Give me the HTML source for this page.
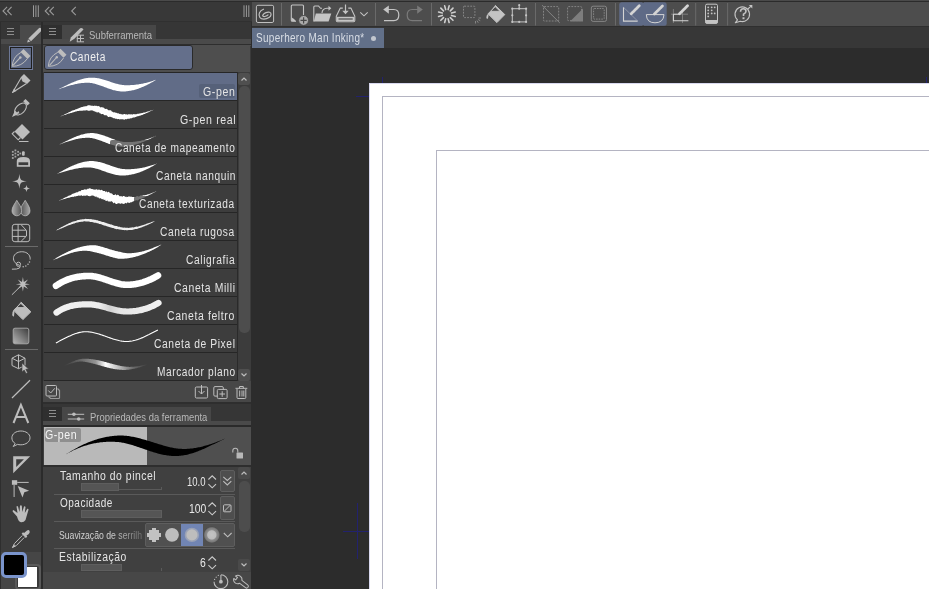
<!DOCTYPE html>
<html><head><meta charset="utf-8">
<style>
*{margin:0;padding:0;box-sizing:border-box}
html,body{width:929px;height:589px;overflow:hidden;background:#2c2c2c;font-family:"Liberation Sans",sans-serif;}
.a{position:absolute}
svg{position:absolute;overflow:visible}
.t{position:absolute;color:#e6e6e6;font-size:12px;white-space:nowrap;line-height:14px;z-index:1}
</style></head><body>
<div class="a" style="left:0px;top:0px;width:929px;height:1px;background:#4a4a4a;"></div>
<div class="a" style="left:0px;top:1px;width:929px;height:1px;background:#2b2b2b;"></div>
<div class="a" style="left:0px;top:2px;width:252px;height:19px;background:#383838;"></div>
<div class="a" style="left:252px;top:2px;width:677px;height:24px;background:#4d4d4d;"></div>
<div class="a" style="left:252px;top:26px;width:677px;height:22px;background:#373737;"></div>
<div class="a" style="left:252px;top:26px;width:677px;height:1px;background:#2f2f2f;"></div>
<div class="a" style="left:252px;top:48px;width:677px;height:541px;background:#2c2c2c;"></div>
<div class="a" style="left:369px;top:83px;width:560px;height:506px;background:#ffffff;"></div>
<div class="a" style="left:369px;top:83px;width:560px;height:1px;background:#d8d8ee;"></div>
<div class="a" style="left:369px;top:83px;width:1px;height:506px;background:#d8d8ee;"></div>
<div class="a" style="left:382px;top:96px;width:547px;height:1px;background:#b4b4c2;"></div>
<div class="a" style="left:382px;top:96px;width:1px;height:493px;background:#b4b4c2;"></div>
<div class="a" style="left:436px;top:150px;width:493px;height:1px;background:#b4b4c2;"></div>
<div class="a" style="left:436px;top:150px;width:1px;height:439px;background:#b4b4c2;"></div>
<div class="a" style="left:357px;top:503px;width:1px;height:56px;background:#22226e;"></div>
<div class="a" style="left:343px;top:531px;width:26px;height:1px;background:#22226e;"></div>
<div class="a" style="left:382px;top:77px;width:1px;height:6px;background:#22226e;"></div>
<div class="a" style="left:356px;top:96px;width:13px;height:1px;background:#22226e;"></div>
<div class="a" style="left:926px;top:77px;width:1px;height:6px;background:#22226e;"></div>
<div class="a" style="left:252px;top:28px;width:132px;height:20px;background:#627089;"></div>
<div class="t" style="left:255.70px;top:30.90px;font-size:12.5px;color:#d8dde5;transform:scaleX(0.7963);transform-origin:0 0;letter-spacing:0.4px;">Superhero Man Inking*</div>
<div class="a" style="left:371px;top:35.5px;width:5.2px;height:5.2px;border-radius:3px;background:#c2c7cf"></div>
<div class="a" style="left:0px;top:21px;width:252px;height:1px;background:#303030;"></div>
<div class="a" style="left:0px;top:22px;width:41px;height:567px;background:#3c3c3c;"></div>
<div class="a" style="left:0px;top:22px;width:1px;height:567px;background:#2e2e2e;"></div>
<div class="a" style="left:41px;top:22px;width:2px;height:567px;background:#2b2b2b;"></div>
<div class="a" style="left:1px;top:22px;width:40px;height:22px;background:#363636;"></div>
<div class="a" style="left:1px;top:39px;width:40px;height:5px;background:#4a4a4a;"></div>
<div class="a" style="left:20px;top:25px;width:21px;height:19px;background:#4a4a4a;"></div>
<div class="a" style="left:7px;top:28px;width:7px;height:1px;background:#8e8e8e;"></div>
<div class="a" style="left:7px;top:31px;width:7px;height:1px;background:#8e8e8e;"></div>
<div class="a" style="left:7px;top:34px;width:7px;height:1px;background:#8e8e8e;"></div>
<svg style="left:25px;top:26px;overflow:hidden" width="16" height="18" viewBox="0 0 16 18"><path d="M13.6,2.4 Q15,1.2 16.2,2.4 Q17.4,3.6 16.2,5 L6,15.2 L3.4,12.6 Z M3,13.2 L5.4,15.6 L2.2,16.6 Z" fill="#bdbdbd"/></svg>
<div class="a" style="left:43px;top:22px;width:208px;height:17px;background:#363636;"></div>
<div class="a" style="left:43px;top:25px;width:19px;height:14px;background:#2f2f2f;"></div>
<div class="a" style="left:49px;top:28px;width:7px;height:1px;background:#8e8e8e;"></div>
<div class="a" style="left:49px;top:31px;width:7px;height:1px;background:#8e8e8e;"></div>
<div class="a" style="left:49px;top:34px;width:7px;height:1px;background:#8e8e8e;"></div>
<div class="a" style="left:62px;top:25px;width:94px;height:16px;background:#474747;"></div>
<div class="a" style="left:43px;top:39px;width:208px;height:5px;background:#4a4a4a;"></div>
<div class="a" style="left:43px;top:44px;width:208px;height:1px;background:#2e2e2e;"></div>
<div class="a" style="left:43px;top:45px;width:208px;height:27px;background:#4e4e4e;"></div>
<div class="a" style="left:250px;top:46px;width:1px;height:26px;background:#3a3a3a;"></div>
<div class="a" style="left:44px;top:45px;width:149px;height:25px;background:#646f8b;border:1px solid #2a2a2a;border-radius:3px"></div>
<div class="t" style="left:69.60px;top:50.00px;font-size:12px;color:#f0f0f0;transform:scaleX(0.8476);transform-origin:0 0;letter-spacing:0.6px;">Caneta</div>
<div class="t" style="left:88.93px;top:27.70px;font-size:11px;color:#b8b8b8;transform:scaleX(0.8653);transform-origin:0 0;">Subferramenta</div>
<div class="a" style="left:43px;top:72px;width:208px;height:309px;background:#3c3c3c;"></div>
<div class="a" style="left:43px;top:72px;width:1px;height:309px;background:#3a3a3a;"></div>
<div class="a" style="left:44px;top:72px;width:193px;height:1px;background:#262626;"></div>
<div class="a" style="left:44px;top:73px;width:193px;height:27px;background:#616c87;"></div>
<div class="a" style="left:44px;top:100px;width:193px;height:1px;background:#262626;"></div>
<div class="a" style="left:44px;top:101px;width:193px;height:27px;background:#3d3d3d;"></div>
<div class="a" style="left:44px;top:128px;width:193px;height:1px;background:#262626;"></div>
<div class="a" style="left:44px;top:129px;width:193px;height:27px;background:#3d3d3d;"></div>
<div class="a" style="left:44px;top:156px;width:193px;height:1px;background:#262626;"></div>
<div class="a" style="left:44px;top:157px;width:193px;height:27px;background:#3d3d3d;"></div>
<div class="a" style="left:44px;top:184px;width:193px;height:1px;background:#262626;"></div>
<div class="a" style="left:44px;top:185px;width:193px;height:27px;background:#3d3d3d;"></div>
<div class="a" style="left:44px;top:212px;width:193px;height:1px;background:#262626;"></div>
<div class="a" style="left:44px;top:213px;width:193px;height:27px;background:#3d3d3d;"></div>
<div class="a" style="left:44px;top:240px;width:193px;height:1px;background:#262626;"></div>
<div class="a" style="left:44px;top:241px;width:193px;height:27px;background:#3d3d3d;"></div>
<div class="a" style="left:44px;top:268px;width:193px;height:1px;background:#262626;"></div>
<div class="a" style="left:44px;top:269px;width:193px;height:27px;background:#3d3d3d;"></div>
<div class="a" style="left:44px;top:296px;width:193px;height:1px;background:#262626;"></div>
<div class="a" style="left:44px;top:297px;width:193px;height:27px;background:#3d3d3d;"></div>
<div class="a" style="left:44px;top:324px;width:193px;height:1px;background:#262626;"></div>
<div class="a" style="left:44px;top:325px;width:193px;height:27px;background:#3d3d3d;"></div>
<div class="a" style="left:44px;top:352px;width:193px;height:1px;background:#262626;"></div>
<div class="a" style="left:44px;top:353px;width:193px;height:27px;background:#3d3d3d;"></div>
<div class="a" style="left:44px;top:380px;width:193px;height:1px;background:#262626;"></div>
<div class="a" style="left:237px;top:72px;width:1px;height:309px;background:#2a2a2a;"></div>
<svg style="left:0;top:0" width="929" height="589"><path d="M57.00,89.90 L57.82,89.52 L58.64,89.14 L59.46,88.74 L60.27,88.35 L61.08,87.95 L61.90,87.55 L62.71,87.14 L63.52,86.74 L64.33,86.34 L65.14,85.94 L65.95,85.54 L66.76,85.15 L67.57,84.75 L68.39,84.37 L69.20,83.98 L70.01,83.60 L70.83,83.23 L71.65,82.87 L72.46,82.51 L73.29,82.15 L74.11,81.81 L74.93,81.48 L75.76,81.15 L76.59,80.83 L77.42,80.53 L78.26,80.23 L79.10,79.95 L79.94,79.68 L80.78,79.42 L81.63,79.18 L82.49,78.95 L83.34,78.74 L84.21,78.54 L85.07,78.36 L85.94,78.20 L86.82,78.06 L87.69,77.93 L88.58,77.82 L89.47,77.74 L90.37,77.68 L91.29,77.64 L92.21,77.64 L93.13,77.67 L94.05,77.73 L94.97,77.81 L95.88,77.92 L96.78,78.05 L97.69,78.20 L98.59,78.37 L99.48,78.55 L100.37,78.76 L101.26,78.98 L102.14,79.21 L103.01,79.45 L103.88,79.70 L104.75,79.96 L105.60,80.22 L106.46,80.50 L107.31,80.77 L108.15,81.05 L108.98,81.33 L109.81,81.60 L110.64,81.88 L111.46,82.15 L112.27,82.42 L113.07,82.68 L113.87,82.94 L114.67,83.18 L115.45,83.42 L116.23,83.65 L117.01,83.86 L117.77,84.06 L118.54,84.25 L119.29,84.42 L120.04,84.58 L120.78,84.72 L121.52,84.84 L122.26,84.94 L122.98,85.03 L123.71,85.09 L124.47,85.13 L125.25,85.16 L126.04,85.19 L126.83,85.20 L127.62,85.20 L128.41,85.20 L129.21,85.18 L130.01,85.16 L130.81,85.12 L131.62,85.08 L132.42,85.02 L133.23,84.96 L134.05,84.89 L134.86,84.81 L135.68,84.72 L136.51,84.62 L137.33,84.50 L138.16,84.39 L138.99,84.26 L139.83,84.12 L140.67,83.97 L141.51,83.81 L142.35,83.64 L143.20,83.47 L144.05,83.28 L144.90,83.08 L145.75,82.88 L146.61,82.66 L147.46,82.44 L148.33,82.21 L149.19,81.96 L150.05,81.71 L150.92,81.44 L151.79,81.17 L152.65,80.89 L153.52,80.59 L154.39,80.29 L155.26,79.97 L156.13,79.65 L157.00,79.30 L157.00,79.30 L156.20,79.78 L155.40,80.26 L154.61,80.74 L153.81,81.21 L153.01,81.68 L152.21,82.14 L151.42,82.60 L150.61,83.04 L149.81,83.48 L149.01,83.91 L148.20,84.34 L147.39,84.75 L146.58,85.15 L145.77,85.55 L144.95,85.93 L144.14,86.31 L143.32,86.67 L142.49,87.03 L141.67,87.37 L140.84,87.70 L140.01,88.02 L139.17,88.33 L138.33,88.63 L137.49,88.91 L136.65,89.18 L135.80,89.44 L134.95,89.68 L134.10,89.91 L133.24,90.13 L132.38,90.33 L131.52,90.52 L130.66,90.69 L129.79,90.85 L128.92,90.99 L128.05,91.12 L127.17,91.23 L126.29,91.32 L125.41,91.40 L124.53,91.46 L123.62,91.51 L122.68,91.52 L121.74,91.50 L120.81,91.44 L119.88,91.36 L118.96,91.25 L118.04,91.12 L117.13,90.96 L116.23,90.78 L115.33,90.58 L114.43,90.36 L113.55,90.13 L112.67,89.88 L111.79,89.62 L110.93,89.35 L110.07,89.06 L109.21,88.77 L108.36,88.47 L107.52,88.17 L106.68,87.86 L105.85,87.55 L105.03,87.24 L104.21,86.93 L103.40,86.62 L102.59,86.32 L101.79,86.02 L100.99,85.72 L100.20,85.44 L99.41,85.16 L98.63,84.89 L97.85,84.63 L97.08,84.39 L96.31,84.16 L95.55,83.94 L94.79,83.74 L94.03,83.56 L93.28,83.39 L92.53,83.24 L91.79,83.12 L91.04,83.01 L90.30,82.93 L89.53,82.87 L88.76,82.82 L87.97,82.80 L87.18,82.78 L86.39,82.79 L85.60,82.80 L84.79,82.84 L83.99,82.88 L83.18,82.95 L82.37,83.02 L81.55,83.11 L80.73,83.21 L79.90,83.33 L79.08,83.46 L78.24,83.60 L77.41,83.75 L76.57,83.91 L75.73,84.09 L74.89,84.27 L74.05,84.47 L73.20,84.68 L72.35,84.89 L71.50,85.11 L70.65,85.35 L69.80,85.59 L68.95,85.84 L68.09,86.09 L67.24,86.35 L66.38,86.62 L65.53,86.89 L64.67,87.17 L63.82,87.46 L62.96,87.75 L62.10,88.04 L61.25,88.34 L60.40,88.64 L59.54,88.95 L58.69,89.26 L57.84,89.57 L57.00,89.90Z" fill="#ffffff"/><path d="M58.00,117.50 L58.62,117.23 L59.23,116.96 L59.84,116.68 L60.45,116.40 L61.06,116.12 L61.67,115.83 L62.28,115.54 L62.89,115.27 L63.49,114.97 L64.10,114.66 L64.70,114.36 L65.29,114.05 L65.92,113.81 L66.53,113.53 L67.13,113.23 L67.75,112.97 L68.31,112.59 L68.91,112.27 L69.53,112.03 L70.17,111.85 L70.71,111.40 L71.30,111.06 L71.91,110.80 L72.54,110.58 L73.14,110.32 L73.78,110.13 L74.42,109.97 L75.04,109.76 L75.61,109.36 L76.23,109.15 L76.87,109.00 L77.47,108.73 L78.09,108.49 L78.72,108.31 L79.34,108.10 L79.91,107.72 L80.54,107.53 L81.14,107.21 L81.76,106.95 L82.42,106.92 L83.04,106.69 L83.68,106.55 L84.32,106.42 L84.95,106.18 L85.61,106.16 L86.26,106.15 L86.91,105.97 L87.53,105.44 L88.19,105.34 L88.85,105.32 L89.52,105.35 L90.20,105.38 L90.88,105.61 L91.56,105.73 L92.25,105.77 L92.93,105.76 L93.59,105.96 L94.32,105.75 L95.05,105.59 L95.67,105.95 L96.43,105.74 L97.08,105.98 L97.73,106.21 L98.52,105.93 L99.17,106.17 L99.70,106.81 L100.24,107.37 L100.94,107.41 L101.78,107.07 L102.42,107.32 L103.03,107.64 L103.83,107.46 L104.30,108.14 L104.81,108.70 L105.43,108.96 L106.23,108.76 L106.91,108.89 L107.44,109.36 L107.93,109.92 L108.49,110.31 L109.18,110.36 L109.95,110.20 L110.66,110.17 L111.20,110.57 L111.60,111.31 L112.16,111.64 L112.77,111.84 L113.32,112.18 L113.90,112.43 L114.60,112.26 L115.25,112.24 L115.68,112.92 L116.34,112.81 L116.92,112.95 L117.45,113.25 L117.97,113.61 L118.62,113.34 L119.14,113.65 L119.66,113.95 L120.27,113.69 L120.77,114.18 L121.32,114.25 L121.88,114.23 L122.42,114.44 L122.98,114.45 L123.56,114.16 L124.15,113.92 L124.75,114.07 L125.35,114.42 L125.94,114.30 L126.53,114.22 L127.16,114.65 L127.76,114.54 L128.34,114.33 L128.93,114.19 L129.55,114.31 L130.18,114.58 L130.77,114.35 L131.35,114.16 L132.01,114.51 L132.62,114.45 L133.21,114.24 L133.81,114.11 L134.46,114.25 L135.07,114.20 L135.70,114.20 L136.33,114.17 L136.95,114.08 L137.53,113.83 L138.16,113.76 L138.79,113.70 L139.39,113.49 L140.03,113.45 L140.65,113.34 L141.26,113.17 L141.86,112.93 L142.52,112.91 L143.15,112.80 L143.77,112.62 L144.38,112.42 L145.05,112.38 L145.70,112.25 L146.31,112.04 L146.91,111.77 L147.55,111.60 L148.20,111.46 L148.84,111.30 L149.47,111.09 L150.09,110.84 L150.71,110.60 L151.35,110.38 L151.99,110.18 L152.61,109.91 L153.24,109.66 L153.87,109.41 L154.50,109.15 L155.13,108.88 L155.76,108.59 L156.38,108.30 L157.00,108.00 L157.00,108.00 L156.38,108.31 L155.77,108.62 L155.16,108.94 L154.55,109.25 L153.94,109.56 L153.34,109.87 L152.73,110.17 L152.11,110.44 L151.51,110.77 L150.91,111.08 L150.30,111.35 L149.68,111.60 L149.07,111.88 L148.48,112.20 L147.89,112.52 L147.29,112.81 L146.65,112.98 L146.03,113.21 L145.43,113.51 L144.87,113.88 L144.24,114.08 L143.62,114.30 L143.02,114.57 L142.44,114.92 L141.80,115.04 L141.17,115.21 L140.56,115.44 L139.96,115.73 L139.32,115.84 L138.72,116.08 L138.10,116.30 L137.45,116.32 L136.83,116.50 L136.22,116.74 L135.61,116.98 L134.99,117.16 L134.40,117.52 L133.77,117.60 L133.11,117.60 L132.49,117.72 L131.91,118.25 L131.26,118.22 L130.60,118.14 L130.00,118.56 L129.38,118.80 L128.73,118.78 L128.08,118.67 L127.44,118.66 L126.83,119.16 L126.18,119.15 L125.54,119.08 L124.90,119.48 L124.26,119.66 L123.61,119.44 L122.96,119.15 L122.28,119.14 L121.58,119.29 L120.90,119.18 L120.22,119.13 L119.48,119.47 L118.85,119.02 L118.14,119.11 L117.42,119.17 L116.83,118.65 L116.11,118.71 L115.41,118.69 L114.75,118.50 L114.17,118.03 L113.36,118.34 L112.77,117.92 L112.24,117.35 L111.58,117.17 L110.89,117.07 L110.26,116.82 L109.58,116.70 L108.75,116.97 L108.05,116.89 L107.53,116.37 L107.05,115.73 L106.51,115.29 L105.83,115.19 L105.08,115.25 L104.38,115.23 L103.82,114.86 L103.38,114.17 L102.77,113.95 L102.04,114.03 L101.27,114.24 L100.83,113.60 L100.21,113.46 L99.61,113.28 L99.21,112.51 L98.68,112.14 L97.98,112.31 L97.26,112.56 L96.68,112.44 L96.23,111.82 L95.65,111.73 L95.06,111.68 L94.58,111.19 L93.97,111.31 L93.46,110.92 L92.94,110.52 L92.37,110.56 L91.82,110.43 L91.26,110.37 L90.70,110.42 L90.15,110.62 L89.59,110.66 L89.02,110.71 L88.45,110.74 L87.87,110.72 L87.26,110.27 L86.66,110.20 L86.08,110.32 L85.50,110.45 L84.89,110.39 L84.30,110.44 L83.70,110.51 L83.08,110.50 L82.51,110.71 L81.88,110.70 L81.25,110.66 L80.64,110.75 L79.98,110.67 L79.36,110.77 L78.75,110.93 L78.13,111.03 L77.49,111.11 L76.89,111.33 L76.28,111.51 L75.61,111.51 L74.99,111.70 L74.40,111.95 L73.79,112.19 L73.16,112.36 L72.56,112.59 L71.93,112.78 L71.27,112.89 L70.58,112.91 L69.98,113.21 L69.37,113.45 L68.72,113.62 L68.05,113.73 L67.43,113.97 L66.79,114.18 L66.17,114.40 L65.56,114.68 L64.92,114.88 L64.28,115.10 L63.64,115.32 L63.01,115.53 L62.38,115.78 L61.75,116.02 L61.12,116.26 L60.50,116.50 L59.87,116.75 L59.25,117.00 L58.62,117.25 L58.00,117.50Z" fill="#ffffff"/><path d="M57.00,145.50 L57.83,145.14 L58.65,144.76 L59.47,144.38 L60.29,143.99 L61.11,143.60 L61.93,143.20 L62.74,142.80 L63.56,142.40 L64.37,141.99 L65.18,141.59 L65.99,141.19 L66.80,140.78 L67.62,140.39 L68.43,139.99 L69.24,139.60 L70.05,139.21 L70.87,138.82 L71.68,138.44 L72.50,138.07 L73.32,137.71 L74.14,137.35 L74.96,137.00 L75.79,136.66 L76.61,136.33 L77.44,136.02 L78.28,135.71 L79.11,135.41 L79.95,135.13 L80.80,134.87 L81.64,134.61 L82.49,134.38 L83.35,134.16 L84.21,133.95 L85.07,133.77 L85.94,133.60 L86.82,133.45 L87.69,133.33 L88.58,133.22 L89.47,133.14 L90.37,133.09 L91.29,133.06 L92.22,133.07 L93.14,133.12 L94.05,133.19 L94.97,133.30 L95.88,133.43 L96.78,133.59 L97.68,133.77 L98.58,133.97 L99.47,134.19 L100.36,134.43 L101.24,134.69 L102.11,134.96 L102.98,135.24 L103.85,135.53 L104.71,135.83 L105.56,136.14 L106.41,136.46 L107.25,136.78 L108.09,137.10 L108.92,137.43 L109.74,137.75 L110.56,138.07 L111.37,138.39 L112.18,138.70 L112.98,139.01 L113.78,139.31 L114.57,139.60 L115.36,139.88 L116.14,140.14 L116.91,140.40 L117.68,140.64 L118.45,140.86 L119.21,141.07 L119.97,141.26 L120.72,141.42 L121.47,141.57 L122.22,141.70 L122.96,141.80 L123.70,141.88 L124.48,141.94 L125.27,141.98 L126.07,142.01 L126.88,142.03 L127.68,142.05 L128.49,142.05 L129.30,142.04 L130.11,142.01 L130.92,141.98 L131.74,141.94 L132.56,141.88 L133.38,141.82 L134.21,141.74 L135.04,141.65 L135.87,141.56 L136.70,141.44 L137.53,141.32 L138.37,141.19 L139.21,141.04 L140.05,140.89 L140.89,140.72 L141.73,140.54 L142.58,140.35 L143.42,140.15 L144.27,139.94 L145.12,139.71 L145.97,139.47 L146.82,139.23 L147.67,138.96 L148.52,138.69 L149.37,138.41 L150.22,138.11 L151.07,137.81 L151.92,137.49 L152.78,137.16 L153.62,136.81 L154.47,136.46 L155.32,136.09 L156.16,135.70 L157.00,135.30 L157.00,135.30 L156.17,135.72 L155.35,136.15 L154.53,136.57 L153.71,137.00 L152.89,137.41 L152.08,137.83 L151.26,138.24 L150.44,138.64 L149.63,139.04 L148.81,139.43 L148.00,139.81 L147.18,140.19 L146.37,140.56 L145.55,140.92 L144.73,141.28 L143.91,141.63 L143.09,141.97 L142.27,142.30 L141.45,142.62 L140.62,142.93 L139.79,143.23 L138.97,143.53 L138.14,143.81 L137.30,144.08 L136.47,144.34 L135.63,144.59 L134.79,144.83 L133.95,145.05 L133.10,145.27 L132.26,145.47 L131.41,145.66 L130.56,145.83 L129.70,145.99 L128.85,146.14 L127.99,146.28 L127.12,146.39 L126.26,146.50 L125.39,146.59 L124.52,146.66 L123.63,146.71 L122.71,146.74 L121.78,146.73 L120.86,146.68 L119.95,146.61 L119.03,146.50 L118.12,146.37 L117.22,146.21 L116.32,146.03 L115.42,145.83 L114.53,145.61 L113.64,145.37 L112.76,145.11 L111.89,144.84 L111.02,144.56 L110.15,144.27 L109.29,143.97 L108.44,143.66 L107.59,143.34 L106.75,143.02 L105.91,142.70 L105.08,142.37 L104.26,142.05 L103.44,141.73 L102.63,141.41 L101.82,141.10 L101.02,140.79 L100.22,140.49 L99.43,140.20 L98.64,139.92 L97.86,139.66 L97.09,139.40 L96.32,139.16 L95.55,138.94 L94.79,138.73 L94.03,138.54 L93.28,138.38 L92.53,138.23 L91.78,138.10 L91.04,138.00 L90.30,137.92 L89.53,137.87 L88.76,137.83 L87.97,137.81 L87.18,137.80 L86.39,137.82 L85.59,137.84 L84.79,137.89 L83.98,137.95 L83.17,138.02 L82.36,138.11 L81.54,138.21 L80.71,138.33 L79.89,138.46 L79.06,138.60 L78.22,138.76 L77.39,138.92 L76.55,139.10 L75.71,139.30 L74.86,139.50 L74.01,139.71 L73.17,139.93 L72.32,140.17 L71.47,140.41 L70.61,140.66 L69.76,140.92 L68.91,141.18 L68.05,141.46 L67.20,141.74 L66.34,142.03 L65.49,142.32 L64.63,142.62 L63.78,142.92 L62.92,143.23 L62.07,143.54 L61.22,143.86 L60.37,144.18 L59.53,144.50 L58.68,144.83 L57.84,145.16 L57.00,145.50Z" fill="#ffffff"/><path d="M57.00,173.80 L57.80,173.36 L58.59,172.92 L59.39,172.48 L60.18,172.04 L60.98,171.60 L61.77,171.16 L62.57,170.72 L63.37,170.29 L64.17,169.86 L64.97,169.43 L65.77,169.01 L66.58,168.59 L67.38,168.18 L68.19,167.77 L69.00,167.37 L69.81,166.98 L70.63,166.59 L71.44,166.21 L72.26,165.84 L73.09,165.48 L73.91,165.13 L74.74,164.79 L75.58,164.45 L76.41,164.13 L77.25,163.82 L78.10,163.53 L78.94,163.25 L79.79,162.98 L80.65,162.72 L81.51,162.48 L82.38,162.26 L83.25,162.05 L84.12,161.86 L85.00,161.68 L85.88,161.53 L86.77,161.39 L87.66,161.28 L88.56,161.18 L89.46,161.11 L90.38,161.06 L91.32,161.04 L92.26,161.05 L93.20,161.09 L94.13,161.16 L95.05,161.26 L95.98,161.39 L96.89,161.53 L97.80,161.70 L98.71,161.89 L99.60,162.10 L100.50,162.32 L101.38,162.55 L102.26,162.80 L103.14,163.06 L104.00,163.33 L104.86,163.61 L105.72,163.89 L106.57,164.18 L107.41,164.47 L108.25,164.76 L109.08,165.06 L109.90,165.35 L110.72,165.64 L111.53,165.93 L112.34,166.21 L113.14,166.49 L113.93,166.76 L114.72,167.02 L115.50,167.27 L116.27,167.51 L117.04,167.73 L117.80,167.95 L118.56,168.15 L119.31,168.33 L120.05,168.50 L120.79,168.65 L121.53,168.78 L122.26,168.89 L122.99,168.98 L123.71,169.05 L124.47,169.10 L125.26,169.14 L126.05,169.17 L126.84,169.19 L127.63,169.20 L128.43,169.20 L129.22,169.19 L130.02,169.17 L130.83,169.15 L131.63,169.11 L132.44,169.06 L133.25,169.00 L134.07,168.94 L134.88,168.86 L135.70,168.77 L136.52,168.68 L137.35,168.57 L138.18,168.46 L139.01,168.33 L139.84,168.20 L140.68,168.06 L141.51,167.90 L142.36,167.74 L143.20,167.56 L144.05,167.38 L144.89,167.19 L145.74,166.99 L146.60,166.78 L147.45,166.56 L148.31,166.32 L149.17,166.08 L150.03,165.83 L150.90,165.58 L151.77,165.31 L152.63,165.03 L153.50,164.74 L154.38,164.45 L155.25,164.14 L156.12,163.82 L157.00,163.50 L157.00,163.50 L156.21,164.00 L155.42,164.49 L154.62,164.98 L153.83,165.45 L153.03,165.92 L152.23,166.38 L151.43,166.83 L150.63,167.27 L149.83,167.71 L149.02,168.13 L148.21,168.55 L147.40,168.95 L146.59,169.35 L145.77,169.73 L144.95,170.10 L144.13,170.47 L143.31,170.82 L142.49,171.16 L141.66,171.50 L140.83,171.82 L139.99,172.13 L139.16,172.42 L138.32,172.71 L137.48,172.98 L136.63,173.24 L135.78,173.49 L134.93,173.73 L134.08,173.95 L133.22,174.16 L132.37,174.36 L131.51,174.54 L130.64,174.71 L129.78,174.87 L128.91,175.01 L128.04,175.14 L127.16,175.25 L126.29,175.35 L125.41,175.43 L124.53,175.50 L123.62,175.54 L122.68,175.56 L121.74,175.55 L120.80,175.51 L119.87,175.44 L118.95,175.34 L118.02,175.21 L117.11,175.07 L116.20,174.90 L115.29,174.71 L114.40,174.50 L113.50,174.28 L112.62,174.05 L111.74,173.80 L110.86,173.54 L110.00,173.27 L109.14,172.99 L108.28,172.71 L107.43,172.42 L106.59,172.13 L105.75,171.84 L104.92,171.54 L104.10,171.25 L103.28,170.96 L102.47,170.67 L101.66,170.39 L100.86,170.11 L100.07,169.84 L99.28,169.58 L98.50,169.33 L97.73,169.09 L96.96,168.87 L96.20,168.65 L95.44,168.45 L94.69,168.27 L93.95,168.10 L93.21,167.95 L92.47,167.82 L91.74,167.71 L91.01,167.62 L90.29,167.55 L89.54,167.50 L88.78,167.47 L88.01,167.45 L87.23,167.44 L86.45,167.45 L85.67,167.47 L84.88,167.51 L84.09,167.56 L83.29,167.62 L82.49,167.69 L81.68,167.78 L80.87,167.88 L80.06,167.99 L79.24,168.11 L78.42,168.24 L77.59,168.38 L76.76,168.53 L75.92,168.70 L75.09,168.87 L74.25,169.05 L73.40,169.23 L72.56,169.43 L71.71,169.63 L70.85,169.85 L70.00,170.06 L69.14,170.29 L68.28,170.52 L67.42,170.75 L66.56,170.99 L65.70,171.23 L64.83,171.48 L63.96,171.73 L63.09,171.99 L62.23,172.24 L61.36,172.50 L60.49,172.76 L59.61,173.02 L58.74,173.28 L57.87,173.54 L57.00,173.80Z" fill="#ffffff"/><path d="M57.00,201.50 L57.62,201.23 L58.24,200.94 L58.85,200.65 L59.46,200.35 L60.07,200.06 L60.67,199.75 L61.29,199.46 L61.92,199.23 L62.51,198.89 L63.10,198.54 L63.69,198.20 L64.31,197.93 L64.90,197.59 L65.53,197.36 L66.17,197.14 L66.74,196.76 L67.37,196.52 L67.96,196.19 L68.55,195.84 L69.15,195.54 L69.82,195.43 L70.44,195.17 L71.03,194.84 L71.63,194.54 L72.15,193.99 L72.75,193.65 L73.40,193.52 L74.11,193.55 L74.63,192.96 L75.28,192.83 L75.94,192.74 L76.49,192.21 L77.19,192.27 L77.85,192.21 L78.45,191.85 L78.94,191.02 L79.67,191.28 L80.34,191.24 L80.94,190.85 L81.46,190.03 L82.13,189.92 L82.83,190.10 L83.50,190.08 L84.07,189.30 L84.78,189.53 L85.44,189.43 L86.11,189.37 L86.81,189.73 L87.42,188.86 L88.09,188.67 L88.77,188.66 L89.45,188.27 L90.15,188.28 L90.86,188.70 L91.56,189.11 L92.27,189.04 L92.95,189.28 L93.63,189.41 L94.32,189.51 L95.00,189.68 L95.74,189.47 L96.50,189.21 L97.19,189.32 L97.70,190.19 L98.59,189.47 L99.27,189.61 L99.87,190.06 L100.53,190.26 L101.39,189.77 L102.04,190.01 L102.59,190.56 L103.18,190.97 L103.91,190.95 L104.65,190.88 L105.26,191.17 L105.61,192.23 L106.67,191.23 L107.15,191.88 L107.60,192.62 L108.56,191.87 L109.22,191.96 L109.60,192.87 L110.07,193.48 L111.03,192.67 L111.44,193.45 L112.04,193.66 L112.61,193.93 L112.97,194.88 L113.58,195.03 L114.21,195.09 L114.92,194.83 L115.76,194.01 L116.07,195.17 L116.68,195.19 L117.36,194.80 L117.96,194.74 L118.50,194.88 L118.95,195.52 L119.41,196.15 L119.96,196.26 L120.53,196.16 L121.10,195.99 L121.62,196.15 L122.12,197.02 L122.68,196.34 L123.24,196.12 L123.82,196.12 L124.40,196.11 L125.02,197.05 L125.60,196.73 L126.18,196.43 L126.83,197.33 L127.41,197.10 L127.99,196.85 L128.57,196.59 L129.14,196.32 L129.80,196.86 L130.39,196.69 L130.96,196.46 L131.62,196.77 L132.26,196.94 L132.89,196.97 L133.51,196.96 L134.15,197.02 L134.78,197.04 L135.40,196.96 L135.99,196.75 L136.54,196.35 L137.12,196.11 L137.81,196.31 L138.53,196.55 L139.17,196.52 L139.68,195.95 L140.31,195.86 L140.99,195.92 L141.64,195.86 L142.30,195.80 L142.91,195.61 L143.52,195.37 L144.13,195.16 L144.81,195.14 L145.47,195.03 L146.12,194.91 L146.80,194.82 L147.37,194.46 L148.03,194.34 L148.71,194.23 L149.32,193.96 L149.95,193.71 L150.61,193.55 L151.26,193.36 L151.88,193.08 L152.52,192.84 L153.17,192.61 L153.82,192.38 L154.46,192.12 L155.10,191.87 L155.74,191.59 L156.37,191.30 L157.00,191.00 L157.00,191.00 L156.38,191.32 L155.76,191.64 L155.15,191.97 L154.54,192.31 L153.93,192.63 L153.33,192.96 L152.73,193.30 L152.12,193.61 L151.49,193.88 L150.89,194.22 L150.30,194.58 L149.68,194.84 L149.04,195.07 L148.47,195.45 L147.88,195.81 L147.20,195.92 L146.63,196.29 L146.03,196.62 L145.44,196.94 L144.87,197.34 L144.23,197.55 L143.59,197.72 L142.95,197.92 L142.36,198.24 L141.76,198.56 L141.19,198.97 L140.57,199.23 L139.83,199.00 L139.22,199.29 L138.69,199.85 L138.13,200.35 L137.46,200.40 L136.76,200.28 L136.10,200.33 L135.47,200.51 L134.85,200.77 L134.24,201.06 L133.61,201.27 L132.99,201.51 L132.38,201.87 L131.79,202.36 L131.11,202.30 L130.45,202.28 L129.86,202.96 L129.18,202.82 L128.51,202.68 L127.84,202.54 L127.17,202.39 L126.57,203.38 L125.90,203.14 L125.23,202.87 L124.60,203.85 L123.93,203.87 L123.26,203.88 L122.57,203.65 L121.88,202.93 L121.13,203.74 L120.40,203.80 L119.72,203.51 L119.04,203.26 L118.34,203.19 L117.55,203.61 L116.75,204.03 L116.04,203.92 L115.39,203.59 L114.82,202.91 L114.18,202.62 L113.24,203.46 L112.83,202.29 L112.29,201.67 L111.67,201.36 L111.03,201.13 L110.14,201.69 L109.46,201.55 L108.81,201.35 L107.97,201.70 L107.68,200.47 L106.90,200.65 L106.03,201.12 L105.44,200.78 L105.15,199.60 L104.35,199.89 L103.58,200.11 L103.39,198.67 L102.49,199.31 L101.85,199.18 L101.34,198.69 L100.82,198.26 L100.16,198.27 L99.46,198.42 L98.86,198.29 L98.47,197.44 L97.88,197.28 L97.23,197.40 L96.66,197.22 L96.30,196.19 L95.56,196.79 L95.00,196.63 L94.51,196.13 L94.00,195.70 L93.43,195.67 L92.87,195.61 L92.30,195.59 L91.73,195.73 L91.19,195.57 L90.64,195.92 L90.10,196.32 L89.55,196.34 L88.98,195.97 L88.41,196.00 L87.83,195.88 L87.19,195.09 L86.64,195.55 L86.06,195.60 L85.47,195.64 L84.93,196.02 L84.25,195.41 L83.67,195.57 L83.12,195.95 L82.54,196.06 L81.81,195.47 L81.16,195.32 L80.58,195.54 L80.06,196.07 L79.30,195.52 L78.65,195.46 L78.06,195.71 L77.51,196.10 L76.81,195.91 L76.22,196.17 L75.62,196.39 L74.89,196.17 L74.35,196.58 L73.75,196.84 L73.10,196.90 L72.37,196.77 L71.72,196.88 L71.06,196.98 L70.43,197.15 L69.85,197.49 L69.20,197.64 L68.54,197.74 L67.88,197.88 L67.26,198.11 L66.58,198.22 L65.97,198.48 L65.35,198.74 L64.69,198.88 L64.06,199.11 L63.40,199.28 L62.74,199.44 L62.08,199.61 L61.46,199.89 L60.83,200.11 L60.18,200.33 L59.54,200.56 L58.90,200.78 L58.26,201.01 L57.63,201.25 L57.00,201.50Z" fill="#ffffff"/><path d="M56.00,230.50 L56.73,229.91 L57.50,229.37 L58.32,228.95 L59.10,228.44 L59.91,228.00 L60.74,227.60 L61.51,227.08 L62.36,226.72 L63.14,226.22 L63.98,225.86 L64.80,225.44 L65.58,224.96 L66.36,224.47 L67.25,224.23 L68.06,223.82 L68.84,223.35 L69.63,222.90 L70.50,222.64 L71.34,222.34 L72.11,221.85 L73.04,221.79 L73.79,221.25 L74.68,221.13 L75.53,220.90 L76.37,220.65 L77.19,220.35 L77.99,219.96 L78.88,219.96 L79.70,219.64 L80.55,219.45 L81.41,219.39 L82.26,219.20 L83.13,219.28 L83.98,219.20 L84.83,219.09 L85.69,218.87 L86.55,218.96 L87.40,219.02 L88.26,218.95 L89.11,219.05 L89.96,219.19 L90.83,219.09 L91.68,219.23 L92.50,219.54 L93.38,219.55 L94.22,219.73 L95.10,219.76 L95.93,220.00 L96.73,220.37 L97.64,220.30 L98.39,220.86 L99.26,220.96 L100.14,221.06 L100.90,221.54 L101.78,221.65 L102.55,222.09 L103.46,222.09 L104.31,222.31 L105.11,222.65 L105.98,222.80 L106.73,223.29 L107.60,223.40 L108.41,223.71 L109.23,223.97 L110.04,224.29 L110.90,224.39 L111.73,224.60 L112.49,225.04 L113.33,225.21 L114.07,225.69 L114.96,225.66 L115.76,225.91 L116.60,225.98 L117.39,226.25 L118.15,226.66 L118.96,226.80 L119.79,226.86 L120.55,227.27 L121.38,227.24 L122.16,227.48 L122.96,227.61 L123.76,227.73 L124.58,227.53 L125.36,227.84 L126.16,227.84 L126.95,227.81 L127.74,227.63 L128.55,227.91 L129.35,227.75 L130.14,227.66 L130.93,227.48 L131.74,227.42 L132.54,227.32 L133.38,227.40 L134.18,227.23 L134.99,227.10 L135.77,226.78 L136.57,226.59 L137.45,226.65 L138.26,226.45 L139.08,226.23 L139.90,226.01 L140.70,225.71 L141.51,225.45 L142.37,225.28 L143.21,225.08 L144.01,224.72 L144.84,224.45 L145.65,224.13 L146.45,223.77 L147.31,223.53 L148.16,223.27 L148.99,222.95 L149.82,222.63 L150.70,222.42 L151.50,222.00 L152.35,221.71 L153.21,221.41 L154.07,221.14 L155.00,221.00 L155.00,221.00 L154.28,221.60 L153.49,222.06 L152.70,222.49 L151.90,222.93 L151.05,223.22 L150.28,223.71 L149.46,224.09 L148.64,224.45 L147.84,224.86 L147.05,225.27 L146.20,225.55 L145.36,225.86 L144.54,226.20 L143.69,226.43 L142.88,226.80 L142.09,227.19 L141.25,227.45 L140.40,227.67 L139.57,227.94 L138.74,228.17 L137.90,228.41 L137.13,228.88 L136.28,229.08 L135.41,229.11 L134.57,229.32 L133.72,229.44 L132.91,229.79 L132.06,229.91 L131.22,230.06 L130.36,230.04 L129.50,230.09 L128.65,230.02 L127.81,230.35 L126.95,230.19 L126.09,230.14 L125.24,230.07 L124.37,230.27 L123.54,229.94 L122.69,229.88 L121.84,229.80 L120.97,229.80 L120.15,229.50 L119.26,229.60 L118.44,229.33 L117.60,229.11 L116.71,229.14 L115.85,229.01 L115.04,228.66 L114.19,228.47 L113.43,227.99 L112.52,227.99 L111.71,227.67 L110.82,227.61 L110.00,227.32 L109.21,226.91 L108.37,226.70 L107.54,226.44 L106.70,226.22 L105.92,225.80 L105.02,225.76 L104.24,225.38 L103.39,225.19 L102.59,224.89 L101.85,224.39 L100.97,224.31 L100.20,223.93 L99.31,223.94 L98.54,223.57 L97.76,223.22 L96.86,223.35 L96.12,222.86 L95.27,222.84 L94.45,222.71 L93.68,222.40 L92.87,222.26 L92.10,221.98 L91.27,222.02 L90.47,221.94 L89.69,221.64 L88.89,221.61 L88.09,221.59 L87.30,221.44 L86.50,221.45 L85.71,221.53 L84.92,221.36 L84.12,221.33 L83.32,221.39 L82.54,221.63 L81.74,221.66 L80.95,221.87 L80.15,221.97 L79.32,221.99 L78.56,222.36 L77.71,222.38 L76.88,222.51 L76.07,222.74 L75.27,223.01 L74.51,223.42 L73.61,223.44 L72.89,223.97 L72.01,224.09 L71.20,224.43 L70.42,224.83 L69.56,225.06 L68.69,225.28 L67.85,225.59 L67.09,226.09 L66.22,226.34 L65.35,226.63 L64.52,226.98 L63.71,227.41 L62.84,227.71 L62.04,228.16 L61.16,228.46 L60.34,228.87 L59.50,229.26 L58.63,229.57 L57.80,229.97 L56.92,230.27 L56.00,230.50Z" fill="#eeeeee"/><path d="M53.00,260.20 L53.64,259.76 L54.28,259.32 L54.92,258.88 L55.56,258.44 L56.19,257.99 L56.82,257.53 L57.47,257.13 L58.14,256.76 L58.81,256.39 L59.48,256.02 L60.15,255.66 L60.82,255.30 L61.49,254.94 L62.16,254.59 L62.83,254.24 L63.49,253.90 L64.16,253.56 L64.83,253.22 L65.50,252.89 L66.17,252.56 L66.84,252.24 L67.52,251.92 L68.19,251.61 L68.86,251.30 L69.53,251.00 L70.20,250.70 L70.88,250.41 L71.55,250.12 L72.23,249.84 L72.91,249.57 L73.58,249.30 L74.26,249.04 L74.94,248.79 L75.62,248.54 L76.31,248.30 L76.99,248.07 L77.67,247.84 L78.36,247.62 L79.05,247.41 L79.74,247.21 L80.43,247.02 L81.13,246.83 L81.83,246.66 L82.53,246.49 L83.23,246.33 L83.93,246.18 L84.64,246.04 L85.35,245.91 L86.06,245.79 L86.77,245.67 L87.49,245.57 L88.21,245.48 L88.94,245.40 L89.68,245.32 L90.43,245.25 L91.18,245.19 L91.93,245.16 L92.67,245.15 L93.42,245.16 L94.17,245.18 L94.92,245.22 L95.65,245.32 L96.38,245.46 L97.11,245.60 L97.83,245.76 L98.55,245.92 L99.27,246.09 L99.98,246.27 L100.69,246.46 L101.40,246.65 L102.10,246.84 L102.80,247.05 L103.50,247.25 L104.19,247.46 L104.89,247.67 L105.58,247.88 L106.26,248.10 L106.95,248.31 L107.63,248.53 L108.31,248.74 L108.98,248.96 L109.65,249.17 L110.33,249.38 L110.99,249.58 L111.66,249.79 L112.32,249.99 L112.98,250.18 L113.63,250.37 L114.29,250.56 L114.94,250.73 L115.59,250.90 L116.23,251.07 L116.87,251.22 L117.51,251.37 L118.14,251.51 L118.77,251.63 L119.40,251.75 L120.03,251.86 L120.64,252.03 L121.25,252.19 L121.85,252.34 L122.46,252.49 L123.07,252.63 L123.67,252.76 L124.28,252.87 L124.90,252.98 L125.53,253.05 L126.17,253.09 L126.81,253.13 L127.46,253.16 L128.11,253.18 L128.75,253.19 L129.41,253.19 L130.06,253.18 L130.71,253.16 L131.37,253.13 L132.03,253.10 L132.69,253.05 L133.35,253.00 L134.01,252.93 L134.68,252.86 L135.34,252.78 L136.01,252.69 L136.68,252.59 L137.35,252.48 L138.02,252.37 L138.69,252.25 L139.37,252.11 L140.04,251.97 L140.72,251.83 L141.40,251.67 L142.07,251.51 L142.75,251.33 L143.43,251.15 L144.11,250.97 L144.79,250.77 L145.48,250.57 L146.16,250.36 L146.84,250.14 L147.52,249.92 L148.21,249.69 L148.89,249.45 L149.58,249.21 L150.27,248.95 L150.95,248.70 L151.64,248.43 L152.33,248.16 L153.01,247.88 L153.70,247.60 L154.39,247.31 L155.08,247.01 L155.77,246.71 L156.45,246.40 L157.16,246.13 L157.89,245.89 L158.62,245.64 L159.35,245.37 L160.07,245.09 L160.79,244.80 L161.50,244.50 L161.50,244.50 L160.86,244.94 L160.22,245.38 L159.59,245.83 L158.95,246.28 L158.33,246.73 L157.70,247.19 L157.05,247.60 L156.38,247.96 L155.72,248.33 L155.05,248.69 L154.38,249.04 L153.71,249.39 L153.04,249.74 L152.37,250.08 L151.70,250.41 L151.03,250.74 L150.36,251.07 L149.69,251.39 L149.02,251.70 L148.35,252.01 L147.68,252.32 L147.00,252.62 L146.33,252.91 L145.66,253.20 L144.98,253.48 L144.31,253.75 L143.63,254.02 L142.95,254.29 L142.27,254.54 L141.59,254.79 L140.91,255.04 L140.23,255.28 L139.55,255.51 L138.87,255.73 L138.18,255.95 L137.49,256.16 L136.81,256.36 L136.12,256.56 L135.43,256.75 L134.74,256.93 L134.04,257.10 L133.35,257.27 L132.65,257.43 L131.95,257.58 L131.25,257.72 L130.55,257.85 L129.85,257.98 L129.15,258.10 L128.44,258.20 L127.73,258.30 L127.02,258.39 L126.31,258.48 L125.59,258.55 L124.87,258.62 L124.12,258.70 L123.38,258.77 L122.63,258.82 L121.88,258.84 L121.13,258.85 L120.38,258.84 L119.63,258.81 L118.89,258.77 L118.15,258.64 L117.43,258.50 L116.70,258.36 L115.98,258.20 L115.26,258.03 L114.55,257.86 L113.83,257.68 L113.12,257.49 L112.42,257.30 L111.72,257.10 L111.02,256.90 L110.32,256.70 L109.62,256.49 L108.93,256.27 L108.24,256.06 L107.56,255.85 L106.87,255.63 L106.19,255.42 L105.52,255.20 L104.84,254.99 L104.17,254.78 L103.50,254.57 L102.83,254.36 L102.17,254.16 L101.51,253.96 L100.85,253.77 L100.19,253.58 L99.54,253.40 L98.89,253.22 L98.25,253.05 L97.60,252.89 L96.96,252.74 L96.32,252.59 L95.69,252.46 L95.06,252.33 L94.43,252.22 L93.81,252.09 L93.20,251.93 L92.60,251.77 L91.99,251.62 L91.38,251.47 L90.77,251.34 L90.17,251.21 L89.56,251.10 L88.94,251.00 L88.31,250.93 L87.68,250.88 L87.04,250.83 L86.40,250.80 L85.75,250.78 L85.11,250.78 L84.46,250.78 L83.80,250.79 L83.15,250.82 L82.49,250.86 L81.83,250.90 L81.17,250.96 L80.51,251.03 L79.84,251.11 L79.18,251.20 L78.51,251.30 L77.84,251.41 L77.16,251.53 L76.49,251.66 L75.81,251.80 L75.14,251.94 L74.46,252.10 L73.78,252.27 L73.10,252.44 L72.42,252.63 L71.74,252.82 L71.06,253.02 L70.38,253.23 L69.69,253.45 L69.01,253.67 L68.32,253.90 L67.64,254.14 L66.95,254.39 L66.27,254.65 L65.58,254.91 L64.89,255.18 L64.21,255.45 L63.52,255.73 L62.83,256.02 L62.14,256.31 L61.46,256.61 L60.77,256.92 L60.08,257.23 L59.40,257.55 L58.71,257.87 L58.02,258.19 L57.32,258.49 L56.59,258.75 L55.87,259.03 L55.15,259.31 L54.43,259.60 L53.71,259.89 L53.00,260.20Z" fill="#ffffff"/><path d="M56.00,285.80 L57.00,285.12 L58.00,284.46 L59.00,283.84 L60.00,283.24 L61.00,282.67 L62.00,282.13 L63.00,281.62 L64.00,281.14 L65.00,280.68 L66.00,280.25 L67.00,279.84 L68.00,279.45 L69.00,279.09 L70.00,278.76 L71.00,278.44 L72.00,278.15 L73.00,277.88 L74.00,277.63 L75.00,277.40 L76.00,277.19 L77.00,277.00 L78.00,276.83 L79.00,276.68 L80.00,276.54 L81.00,276.42 L82.00,276.32 L83.00,276.23 L84.00,276.16 L85.00,276.10 L86.00,276.05 L87.00,276.02 L88.00,276.01 L89.00,276.00 L90.00,276.02 L91.00,276.07 L92.00,276.16 L93.00,276.27 L94.00,276.42 L95.00,276.59 L96.00,276.79 L97.00,277.01 L98.00,277.25 L99.00,277.51 L100.00,277.79 L101.00,278.08 L102.00,278.39 L103.00,278.70 L104.00,279.03 L105.00,279.37 L106.00,279.71 L107.00,280.05 L108.00,280.40 L109.00,280.75 L110.00,281.09 L111.00,281.43 L112.00,281.77 L113.00,282.10 L114.00,282.41 L115.00,282.72 L116.00,283.01 L117.00,283.29 L118.00,283.55 L119.00,283.79 L120.00,284.01 L121.00,284.21 L122.00,284.38 L123.00,284.53 L124.00,284.64 L125.00,284.73 L126.00,284.78 L127.00,284.80 L128.00,284.79 L129.00,284.76 L130.00,284.71 L131.00,284.64 L132.00,284.55 L133.00,284.44 L134.00,284.31 L135.00,284.17 L136.00,284.00 L137.00,283.81 L138.00,283.61 L139.00,283.38 L140.00,283.13 L141.00,282.87 L142.00,282.59 L143.00,282.29 L144.00,281.96 L145.00,281.62 L146.00,281.26 L147.00,280.89 L148.00,280.49 L149.00,280.07 L150.00,279.64 L151.00,279.19 L152.00,278.71 L153.00,278.22 L154.00,277.72 L155.00,277.19 L156.00,276.64 L157.00,276.08 L158.00,275.50" stroke="#ffffff" stroke-width="6.6" stroke-linecap="round" fill="none"/><defs><filter id="bl" x="-10%" y="-50%" width="120%" height="200%"><feGaussianBlur stdDeviation="0.55"/></filter><linearGradient id="fg" x1="53" x2="162" gradientUnits="userSpaceOnUse"><stop offset="0" stop-color="#f2f2f2"/><stop offset="0.42" stop-color="#eeeeee"/><stop offset="0.52" stop-color="#d2d2d2"/><stop offset="0.62" stop-color="#e6e6e6"/><stop offset="1" stop-color="#f2f2f2"/></linearGradient></defs><path d="M56.50,312.60 L57.50,311.92 L58.50,311.28 L59.50,310.67 L60.50,310.10 L61.50,309.56 L62.50,309.06 L63.50,308.59 L64.50,308.15 L65.50,307.74 L66.50,307.36 L67.50,307.01 L68.50,306.69 L69.50,306.39 L70.50,306.11 L71.50,305.87 L72.50,305.64 L73.50,305.44 L74.50,305.25 L75.50,305.09 L76.50,304.95 L77.50,304.82 L78.50,304.71 L79.50,304.61 L80.50,304.54 L81.50,304.47 L82.50,304.42 L83.50,304.37 L84.50,304.34 L85.50,304.32 L86.50,304.31 L87.50,304.30 L88.50,304.30 L89.50,304.33 L90.50,304.38 L91.50,304.46 L92.50,304.57 L93.50,304.69 L94.50,304.83 L95.50,305.00 L96.50,305.18 L97.50,305.37 L98.50,305.58 L99.50,305.81 L100.50,306.04 L101.50,306.29 L102.50,306.55 L103.50,306.81 L104.50,307.08 L105.50,307.35 L106.50,307.62 L107.50,307.90 L108.50,308.18 L109.50,308.45 L110.50,308.72 L111.50,308.99 L112.50,309.25 L113.50,309.51 L114.50,309.76 L115.50,309.99 L116.50,310.22 L117.50,310.43 L118.50,310.62 L119.50,310.80 L120.50,310.97 L121.50,311.11 L122.50,311.23 L123.50,311.34 L124.50,311.42 L125.50,311.47 L126.50,311.50 L127.50,311.50 L128.50,311.48 L129.50,311.46 L130.50,311.41 L131.50,311.35 L132.50,311.28 L133.50,311.19 L134.50,311.09 L135.50,310.96 L136.50,310.83 L137.50,310.67 L138.50,310.50 L139.50,310.31 L140.50,310.10 L141.50,309.87 L142.50,309.63 L143.50,309.36 L144.50,309.08 L145.50,308.78 L146.50,308.45 L147.50,308.11 L148.50,307.75 L149.50,307.36 L150.50,306.95 L151.50,306.53 L152.50,306.08 L153.50,305.60 L154.50,305.11 L155.50,304.59 L156.50,304.05 L157.50,303.49 L158.50,302.90" stroke="url(#fg)" stroke-width="6.2" stroke-linecap="round" fill="none" filter="url(#bl)"/><path d="M55.90,342.90 L56.90,342.40 L57.90,341.89 L58.90,341.37 L59.90,340.86 L60.90,340.34 L61.90,339.82 L62.90,339.30 L63.90,338.79 L64.90,338.28 L65.90,337.78 L66.90,337.29 L67.90,336.81 L68.90,336.34 L69.90,335.88 L70.90,335.44 L71.90,335.01 L72.90,334.61 L73.90,334.22 L74.90,333.85 L75.90,333.51 L76.90,333.19 L77.90,332.90 L78.90,332.64 L79.90,332.40 L80.90,332.20 L81.90,332.03 L82.90,331.89 L83.90,331.79 L84.90,331.72 L85.90,331.70 L86.90,331.71 L87.90,331.76 L88.90,331.84 L89.90,331.95 L90.90,332.09 L91.90,332.26 L92.90,332.45 L93.90,332.67 L94.90,332.91 L95.90,333.16 L96.90,333.44 L97.90,333.73 L98.90,334.04 L99.90,334.36 L100.90,334.69 L101.90,335.03 L102.90,335.38 L103.90,335.74 L104.90,336.09 L105.90,336.46 L106.90,336.82 L107.90,337.18 L108.90,337.54 L109.90,337.89 L110.90,338.24 L111.90,338.58 L112.90,338.91 L113.90,339.22 L114.90,339.53 L115.90,339.82 L116.90,340.09 L117.90,340.34 L118.90,340.58 L119.90,340.79 L120.90,340.97 L121.90,341.14 L122.90,341.27 L123.90,341.38 L124.90,341.45 L125.90,341.49 L126.90,341.50 L127.90,341.47 L128.90,341.40 L129.90,341.30 L130.90,341.17 L131.90,341.00 L132.90,340.80 L133.90,340.57 L134.90,340.32 L135.90,340.04 L136.90,339.73 L137.90,339.40 L138.90,339.05 L139.90,338.68 L140.90,338.29 L141.90,337.88 L142.90,337.45 L143.90,337.01 L144.90,336.55 L145.90,336.08 L146.90,335.60 L147.90,335.11 L148.90,334.62 L149.90,334.11 L150.90,333.60 L151.90,333.09 L152.90,332.57 L153.90,332.05 L154.90,331.54 L155.90,331.02 L156.90,330.51 L157.90,330.00" stroke="#ffffff" stroke-width="1.1" fill="none"/><defs><linearGradient id="mg" x1="64" x2="147.5" gradientUnits="userSpaceOnUse"><stop offset="0" stop-color="#fff" stop-opacity="0"/><stop offset="0.2" stop-color="#fff" stop-opacity="0.22"/><stop offset="0.38" stop-color="#fff" stop-opacity="0.45"/><stop offset="0.5" stop-color="#fff" stop-opacity="1"/><stop offset="0.64" stop-color="#fff" stop-opacity="0.7"/><stop offset="0.82" stop-color="#fff" stop-opacity="0.25"/><stop offset="1" stop-color="#fff" stop-opacity="0"/></linearGradient></defs><path d="M63.89,365.22 L64.57,365.00 L65.26,364.76 L65.94,364.50 L66.63,364.23 L67.31,363.95 L67.99,363.66 L68.68,363.36 L69.36,363.05 L70.04,362.74 L70.73,362.43 L71.41,362.12 L72.10,361.81 L72.78,361.51 L73.47,361.21 L74.17,360.92 L74.86,360.64 L75.56,360.37 L76.26,360.12 L76.97,359.88 L77.68,359.66 L78.40,359.46 L79.13,359.28 L79.86,359.13 L80.60,359.00 L81.34,358.91 L82.09,358.85 L82.81,358.81 L83.53,358.78 L84.25,358.76 L84.97,358.75 L85.70,358.75 L86.42,358.77 L87.14,358.79 L87.86,358.83 L88.59,358.87 L89.31,358.93 L90.03,358.99 L90.75,359.06 L91.47,359.15 L92.19,359.24 L92.91,359.33 L93.63,359.44 L94.35,359.55 L95.07,359.67 L95.79,359.80 L96.50,359.93 L97.22,360.07 L97.93,360.21 L98.64,360.36 L99.35,360.52 L100.06,360.68 L100.77,360.84 L101.48,361.01 L102.18,361.18 L102.88,361.36 L103.58,361.54 L104.28,361.72 L104.98,361.90 L105.68,362.08 L106.37,362.27 L107.07,362.46 L107.76,362.64 L108.45,362.83 L109.14,363.02 L109.82,363.21 L110.51,363.40 L111.19,363.59 L111.87,363.77 L112.55,363.95 L113.23,364.14 L113.91,364.32 L114.58,364.49 L115.26,364.67 L115.93,364.83 L116.61,365.00 L117.28,365.16 L117.95,365.32 L118.62,365.47 L119.29,365.62 L119.96,365.76 L120.62,365.89 L121.29,366.02 L121.96,366.14 L122.63,366.25 L123.30,366.36 L123.96,366.45 L124.63,366.54 L125.30,366.62 L125.97,366.69 L126.64,366.75 L127.31,366.80 L127.98,366.84 L128.65,366.86 L129.33,366.88 L130.00,366.88 L130.69,366.87 L131.37,366.85 L132.05,366.82 L132.74,366.78 L133.43,366.73 L134.12,366.67 L134.81,366.61 L135.50,366.53 L136.20,366.44 L136.89,366.35 L137.59,366.24 L138.29,366.13 L138.99,366.01 L139.69,365.88 L140.39,365.74 L141.09,365.60 L141.79,365.45 L142.49,365.29 L143.19,365.13 L143.89,364.96 L144.59,364.78 L145.29,364.60 L145.99,364.41 L146.69,364.22 L147.39,364.02 L147.61,364.78 L146.92,365.00 L146.23,365.21 L145.53,365.44 L144.84,365.66 L144.15,365.88 L143.46,366.10 L142.77,366.32 L142.08,366.54 L141.39,366.75 L140.70,366.96 L140.00,367.17 L139.31,367.38 L138.62,367.58 L137.93,367.78 L137.23,367.97 L136.54,368.16 L135.84,368.34 L135.14,368.51 L134.44,368.67 L133.74,368.83 L133.04,368.98 L132.33,369.12 L131.62,369.25 L130.91,369.37 L130.20,369.48 L129.49,369.58 L128.77,369.66 L128.05,369.74 L127.33,369.80 L126.61,369.85 L125.89,369.88 L125.17,369.91 L124.44,369.92 L123.72,369.92 L123.00,369.91 L122.27,369.88 L121.55,369.85 L120.82,369.81 L120.10,369.76 L119.38,369.69 L118.65,369.62 L117.93,369.54 L117.21,369.45 L116.49,369.35 L115.77,369.24 L115.05,369.13 L114.33,369.01 L113.62,368.88 L112.90,368.74 L112.19,368.60 L111.47,368.45 L110.76,368.30 L110.05,368.14 L109.34,367.97 L108.64,367.81 L107.93,367.63 L107.23,367.46 L106.53,367.27 L105.82,367.09 L105.13,366.90 L104.43,366.72 L103.73,366.52 L103.04,366.33 L102.35,366.14 L101.66,365.94 L100.97,365.75 L100.28,365.55 L99.60,365.35 L98.91,365.16 L98.23,364.96 L97.55,364.77 L96.87,364.58 L96.19,364.39 L95.51,364.20 L94.84,364.02 L94.16,363.83 L93.49,363.66 L92.82,363.48 L92.14,363.31 L91.47,363.15 L90.80,362.99 L90.13,362.83 L89.46,362.68 L88.79,362.54 L88.12,362.40 L87.45,362.28 L86.78,362.15 L86.12,362.04 L85.45,361.94 L84.78,361.84 L84.10,361.75 L83.43,361.68 L82.76,361.61 L82.09,361.55 L81.45,361.51 L80.80,361.50 L80.15,361.52 L79.49,361.57 L78.82,361.63 L78.15,361.73 L77.47,361.84 L76.79,361.98 L76.10,362.13 L75.40,362.30 L74.71,362.49 L74.01,362.69 L73.31,362.91 L72.60,363.13 L71.90,363.36 L71.19,363.60 L70.48,363.85 L69.78,364.10 L69.07,364.34 L68.36,364.59 L67.65,364.84 L66.94,365.08 L66.23,365.32 L65.53,365.55 L64.82,365.77 L64.11,365.98Z" fill="url(#mg)"/></svg>
<div class="a" style="left:199px;top:84px;width:36px;height:14px;background:#566179;border-radius:2px"></div>
<div class="t" style="left:202.70px;top:85.00px;font-size:12px;color:#e4e4e4;transform:scaleX(0.8806);transform-origin:0 0;letter-spacing:0.7px;">G-pen</div>
<div class="t" style="left:179.60px;top:113.00px;font-size:12px;color:#e4e4e4;transform:scaleX(0.8839);transform-origin:0 0;letter-spacing:0.7px;">G-pen real</div>
<div class="a" style="left:110px;top:140px;width:127px;height:14px;background:rgba(61,61,61,0.72);border-radius:2px"></div>
<div class="t" style="left:114.60px;top:141.00px;font-size:12px;color:#e4e4e4;transform:scaleX(0.8437);transform-origin:0 0;letter-spacing:0.7px;">Caneta de mapeamento</div>
<div class="t" style="left:155.70px;top:169.00px;font-size:12px;color:#e4e4e4;transform:scaleX(0.8462);transform-origin:0 0;letter-spacing:0.7px;">Caneta nanquin</div>
<div class="a" style="left:134px;top:196px;width:103px;height:14px;background:rgba(61,61,61,0.72);border-radius:2px"></div>
<div class="t" style="left:139.00px;top:197.00px;font-size:12px;color:#e4e4e4;transform:scaleX(0.8442);transform-origin:0 0;letter-spacing:0.7px;">Caneta texturizada</div>
<div class="t" style="left:160.40px;top:225.00px;font-size:12px;color:#e4e4e4;transform:scaleX(0.8506);transform-origin:0 0;letter-spacing:0.7px;">Caneta rugosa</div>
<div class="t" style="left:185.80px;top:253.00px;font-size:12px;color:#e4e4e4;transform:scaleX(0.8526);transform-origin:0 0;letter-spacing:0.7px;">Caligrafia</div>
<div class="t" style="left:173.80px;top:281.00px;font-size:12px;color:#e4e4e4;transform:scaleX(0.8657);transform-origin:0 0;letter-spacing:0.7px;">Caneta Milli</div>
<div class="t" style="left:167.30px;top:309.00px;font-size:12px;color:#e4e4e4;transform:scaleX(0.8714);transform-origin:0 0;letter-spacing:0.7px;">Caneta feltro</div>
<div class="t" style="left:153.90px;top:337.00px;font-size:12px;color:#e4e4e4;transform:scaleX(0.8564);transform-origin:0 0;letter-spacing:0.7px;">Caneta de Pixel</div>
<div class="t" style="left:156.76px;top:365.00px;font-size:12px;color:#e4e4e4;transform:scaleX(0.8440);transform-origin:0 0;letter-spacing:0.7px;">Marcador plano</div>
<div class="a" style="left:238px;top:72px;width:13px;height:309px;background:#3c3c3c;"></div>
<div class="a" style="left:238px;top:73px;width:12px;height:12px;background:#4f4f4f;border-radius:2px"></div>
<div class="a" style="left:239px;top:86px;width:11px;height:247px;background:#4d4d4d;border-radius:5px"></div>
<div class="a" style="left:238px;top:369px;width:12px;height:12px;background:#4f4f4f;border-radius:2px"></div>
<svg style="left:240px;top:75px" width="8" height="8" viewBox="0 0 8 8"><path d="M1.5,5.5 L4,3 L6.5,5.5" stroke="#bdbdbd" stroke-width="1.2" fill="none"/></svg>
<svg style="left:240px;top:371px" width="8" height="8" viewBox="0 0 8 8"><path d="M1.5,2.5 L4,5 L6.5,2.5" stroke="#bdbdbd" stroke-width="1.2" fill="none"/></svg>
<div class="a" style="left:43px;top:381px;width:208px;height:21px;background:#474747;"></div>
<div class="a" style="left:43px;top:402px;width:208px;height:2px;background:#2e2e2e;"></div>
<div class="a" style="left:43px;top:404px;width:208px;height:17px;background:#363636;"></div>
<div class="a" style="left:43px;top:407px;width:19px;height:14px;background:#2f2f2f;"></div>
<div class="a" style="left:49px;top:410px;width:7px;height:1px;background:#8e8e8e;"></div>
<div class="a" style="left:49px;top:413px;width:7px;height:1px;background:#8e8e8e;"></div>
<div class="a" style="left:49px;top:416px;width:7px;height:1px;background:#8e8e8e;"></div>
<div class="a" style="left:62px;top:407px;width:149px;height:18px;background:#474747;"></div>
<div class="t" style="left:89.64px;top:409.80px;font-size:11px;color:#b8b8b8;transform:scaleX(0.8566);transform-origin:0 0;">Propriedades da ferramenta</div>
<div class="a" style="left:43px;top:421px;width:208px;height:4px;background:#4a4a4a;"></div>
<div class="a" style="left:43px;top:425px;width:208px;height:2px;background:#2a2a2a;"></div>
<div class="a" style="left:43px;top:427px;width:208px;height:162px;background:#404040;"></div>
<div class="a" style="left:44px;top:427px;width:103px;height:38px;background:#b9b9b9;"></div>
<div class="a" style="left:147px;top:427px;width:104px;height:38px;background:#4f4f4f;"></div>
<svg style="left:0;top:0" width="929" height="589"><path d="M64.00,455.60 L65.03,454.93 L66.05,454.26 L67.07,453.61 L68.08,452.96 L69.10,452.33 L70.12,451.70 L71.13,451.09 L72.14,450.48 L73.16,449.89 L74.17,449.31 L75.18,448.74 L76.19,448.18 L77.21,447.64 L78.22,447.10 L79.23,446.57 L80.25,446.06 L81.26,445.56 L82.28,445.07 L83.29,444.59 L84.31,444.12 L85.33,443.67 L86.34,443.22 L87.36,442.79 L88.39,442.37 L89.41,441.96 L90.43,441.56 L91.46,441.18 L92.48,440.81 L93.51,440.44 L94.54,440.10 L95.57,439.76 L96.61,439.43 L97.64,439.12 L98.68,438.82 L99.72,438.53 L100.76,438.26 L101.80,437.99 L102.84,437.74 L103.89,437.50 L104.94,437.28 L105.99,437.07 L107.04,436.87 L108.09,436.68 L109.14,436.50 L110.20,436.34 L111.26,436.19 L112.32,436.06 L113.38,435.94 L114.45,435.83 L115.51,435.73 L116.58,435.65 L117.67,435.59 L118.77,435.54 L119.87,435.52 L120.97,435.53 L122.07,435.55 L123.17,435.60 L124.27,435.67 L125.37,435.75 L126.47,435.86 L127.56,435.98 L128.66,436.12 L129.75,436.28 L130.84,436.46 L131.93,436.64 L133.01,436.85 L134.10,437.06 L135.18,437.29 L136.26,437.53 L137.33,437.78 L138.40,438.04 L139.47,438.31 L140.54,438.59 L141.60,438.88 L142.66,439.17 L143.72,439.47 L144.77,439.78 L145.83,440.09 L146.87,440.40 L147.92,440.72 L148.96,441.04 L149.99,441.36 L151.02,441.68 L152.05,442.00 L153.08,442.32 L154.10,442.64 L155.12,442.96 L156.13,443.28 L157.14,443.59 L158.15,443.90 L159.15,444.21 L160.15,444.52 L161.14,444.82 L162.13,445.11 L163.12,445.40 L164.10,445.68 L165.08,445.95 L166.05,446.22 L167.02,446.48 L167.99,446.73 L168.96,446.97 L169.92,447.19 L170.88,447.41 L171.84,447.62 L172.79,447.81 L173.75,447.99 L174.70,448.15 L175.65,448.30 L176.60,448.44 L177.56,448.56 L178.51,448.66 L179.47,448.74 L180.43,448.81 L181.40,448.86 L182.38,448.90 L183.36,448.92 L184.34,448.92 L185.33,448.90 L186.33,448.88 L187.33,448.83 L188.33,448.77 L189.34,448.69 L190.35,448.60 L191.37,448.50 L192.39,448.38 L193.42,448.24 L194.45,448.09 L195.48,447.92 L196.52,447.74 L197.56,447.55 L198.60,447.35 L199.64,447.13 L200.69,446.89 L201.74,446.65 L202.79,446.39 L203.84,446.12 L204.89,445.83 L205.95,445.54 L207.00,445.23 L208.06,444.92 L209.11,444.59 L210.17,444.25 L211.22,443.90 L212.28,443.55 L213.33,443.18 L214.39,442.80 L215.44,442.42 L216.49,442.02 L217.54,441.62 L218.59,441.22 L219.64,440.80 L220.69,440.38 L221.73,439.95 L222.78,439.51 L223.82,439.07 L224.86,438.63 L225.90,438.18 L226.93,437.72 L227.97,437.26 L229.00,436.80 L229.00,436.80 L227.97,437.27 L226.94,437.74 L225.92,438.22 L224.89,438.70 L223.87,439.18 L222.85,439.67 L221.83,440.16 L220.81,440.65 L219.80,441.15 L218.78,441.64 L217.77,442.14 L216.76,442.64 L215.75,443.14 L214.74,443.63 L213.73,444.13 L212.72,444.62 L211.72,445.11 L210.71,445.60 L209.70,446.08 L208.69,446.56 L207.69,447.04 L206.68,447.51 L205.67,447.97 L204.66,448.43 L203.65,448.88 L202.64,449.33 L201.62,449.76 L200.61,450.19 L199.59,450.61 L198.57,451.01 L197.54,451.41 L196.52,451.80 L195.49,452.17 L194.46,452.53 L193.42,452.88 L192.38,453.21 L191.33,453.53 L190.28,453.83 L189.23,454.12 L188.17,454.39 L187.11,454.64 L186.04,454.88 L184.97,455.09 L183.89,455.29 L182.81,455.46 L181.72,455.61 L180.63,455.74 L179.53,455.85 L178.43,455.94 L177.32,455.99 L176.21,456.02 L175.10,456.03 L173.99,456.01 L172.88,455.97 L171.77,455.91 L170.66,455.82 L169.56,455.72 L168.46,455.59 L167.36,455.45 L166.26,455.28 L165.17,455.10 L164.07,454.90 L162.99,454.68 L161.90,454.45 L160.82,454.21 L159.75,453.95 L158.67,453.68 L157.60,453.40 L156.54,453.10 L155.48,452.80 L154.42,452.48 L153.37,452.16 L152.32,451.83 L151.28,451.49 L150.23,451.15 L149.20,450.81 L148.16,450.46 L147.13,450.11 L146.11,449.76 L145.08,449.40 L144.07,449.05 L143.05,448.70 L142.04,448.35 L141.03,447.99 L140.02,447.65 L139.02,447.30 L138.02,446.96 L137.03,446.63 L136.03,446.30 L135.04,445.98 L134.06,445.66 L133.07,445.35 L132.09,445.05 L131.11,444.76 L130.14,444.48 L129.16,444.21 L128.19,443.95 L127.22,443.70 L126.25,443.46 L125.28,443.24 L124.32,443.03 L123.35,442.84 L122.39,442.66 L121.43,442.50 L120.47,442.35 L119.51,442.23 L118.54,442.11 L117.58,442.02 L116.61,441.95 L115.61,441.89 L114.62,441.84 L113.62,441.80 L112.62,441.77 L111.61,441.76 L110.61,441.75 L109.61,441.76 L108.60,441.78 L107.59,441.81 L106.58,441.85 L105.56,441.91 L104.55,441.98 L103.53,442.05 L102.51,442.15 L101.49,442.25 L100.47,442.37 L99.45,442.50 L98.42,442.64 L97.39,442.80 L96.36,442.97 L95.33,443.15 L94.30,443.35 L93.27,443.56 L92.23,443.79 L91.19,444.03 L90.15,444.28 L89.11,444.55 L88.07,444.83 L87.03,445.13 L85.99,445.44 L84.94,445.77 L83.90,446.11 L82.85,446.47 L81.80,446.84 L80.75,447.22 L79.71,447.63 L78.66,448.04 L77.61,448.48 L76.56,448.92 L75.51,449.39 L74.46,449.87 L73.41,450.37 L72.36,450.88 L71.31,451.41 L70.26,451.96 L69.21,452.52 L68.17,453.10 L67.12,453.70 L66.08,454.31 L65.04,454.94 L64.00,455.60Z" fill="#000000"/></svg>
<div class="a" style="left:45px;top:428px;width:36px;height:14px;background:#8f8f8f;border-radius:2px"></div>
<div class="t" style="left:45.00px;top:427.50px;font-size:12px;color:#f4f4f4;transform:scaleX(0.8857);transform-origin:0 0;letter-spacing:0.6px;">G-pen</div>
<div class="a" style="left:43px;top:465px;width:208px;height:2px;background:#2e2e2e;"></div>
<div class="t" style="left:60.40px;top:468.80px;font-size:12px;color:#e4e4e4;transform:scaleX(0.8664);transform-origin:0 0;letter-spacing:0.6px;">Tamanho do pincel</div>
<div class="t" style="left:59.50px;top:496.00px;font-size:12px;color:#e4e4e4;transform:scaleX(0.8333);transform-origin:0 0;letter-spacing:0.6px;">Opacidade</div>
<div class="t" style="left:58.75px;top:527.50px;font-size:11.5px;color:#d0d0d0;transform:scaleX(0.7546);transform-origin:0 0;-webkit-mask-image:linear-gradient(to right,#000 62%,rgba(0,0,0,0.3) 100%);">Suavização de serrilh</div>
<div class="t" style="left:59.14px;top:550.30px;font-size:12px;color:#e4e4e4;transform:scaleX(0.8636);transform-origin:0 0;letter-spacing:0.6px;">Estabilização</div>
<div class="a" style="left:81px;top:483px;width:38px;height:8px;background:#555555;border:1px solid #5e5e5e"></div>
<div class="a" style="left:119px;top:489px;width:43px;height:1px;background:#5a5a5a;"></div>
<div class="a" style="left:161px;top:487px;width:1px;height:2px;background:#5a5a5a;"></div>
<div class="a" style="left:161px;top:568px;width:1px;height:3px;background:#5a5a5a;"></div>
<div class="a" style="left:81px;top:510px;width:81px;height:8px;background:#555555;border:1px solid #5e5e5e"></div>
<div class="a" style="left:81px;top:564px;width:41px;height:7px;background:#555555;border:1px solid #5e5e5e"></div>
<div class="a" style="left:54px;top:494px;width:181px;height:1px;background:#5a5a5a;"></div>
<div class="a" style="left:54px;top:521px;width:181px;height:1px;background:#5a5a5a;"></div>
<div class="a" style="left:54px;top:548px;width:181px;height:1px;background:#5a5a5a;"></div>
<div class="t" style="left:186.67px;top:475.00px;font-size:13px;color:#e8e8e8;transform:scaleX(0.7333);transform-origin:0 0;">10.0</div>
<div class="t" style="left:188.60px;top:501.50px;font-size:13px;color:#e8e8e8;transform:scaleX(0.8000);transform-origin:0 0;">100</div>
<div class="t" style="left:199.80px;top:556.00px;font-size:13px;color:#e8e8e8;transform:scaleX(0.8000);transform-origin:0 0;">6</div>
<div class="a" style="left:220px;top:470px;width:15px;height:22px;background:#4e4e4e;border:1px solid #5e5e5e;border-radius:2px"></div>
<div class="a" style="left:220px;top:496px;width:15px;height:24px;background:#4e4e4e;border:1px solid #5e5e5e;border-radius:2px"></div>
<div class="a" style="left:145px;top:523px;width:90px;height:24px;background:#505050;border:1px solid #5e5e5e;border-radius:2px"></div>
<div class="a" style="left:181px;top:524px;width:22px;height:22px;background:#7185b4;"></div>
<div class="a" style="left:238px;top:467px;width:12px;height:12px;background:#4a4a4a;border-radius:2px"></div>
<div class="a" style="left:239px;top:481px;width:11px;height:51px;background:#4d4d4d;border-radius:5px"></div>
<div class="a" style="left:238px;top:559px;width:12px;height:12px;background:#4a4a4a;border-radius:2px"></div>
<svg style="left:240px;top:469px" width="8" height="8" viewBox="0 0 8 8"><path d="M1.5,5.5 L4,3 L6.5,5.5" stroke="#bdbdbd" stroke-width="1.2" fill="none"/></svg>
<svg style="left:240px;top:561px" width="8" height="8" viewBox="0 0 8 8"><path d="M1.5,2.5 L4,5 L6.5,2.5" stroke="#bdbdbd" stroke-width="1.2" fill="none"/></svg>
<div class="a" style="left:43px;top:572px;width:208px;height:17px;background:#474747;"></div>
<div class="a" style="left:9px;top:46px;width:24px;height:24px;background:#5f6a86;border:1px solid #6d7896"></div><div class="a" style="left:10px;top:47px;width:22px;height:22px;border:1px solid #1e1e1e"></div>
<svg style="left:0;top:0" width="929" height="589"><path d="M23.5,49 L30.5,56 L27.5,59 L20.5,52 Z" fill="#bdbdbd"/><path d="M20.8,52.5 Q12.8,56.8 12.2,66.3 Q21.8,66.5 27.3,58.7" stroke="#bdbdbd" stroke-width="1" fill="none"/><path d="M20,57.8 L13,65.3" stroke="#bdbdbd" stroke-width="1.1"/><circle cx="20.3" cy="57.5" r="1.3" fill="#bdbdbd"/><path d="M24,74 L30.5,80.5 L27,84 L20.5,77.5 Z" fill="#bdbdbd"/><path d="M21,78 L12.5,92.5 L26.5,83.5" stroke="#bdbdbd" stroke-width="1.1" fill="none" stroke-linejoin="round"/><path d="M21,78 L22.5,81.5 L26.5,83.5 L24,80 Z" fill="#bdbdbd"/><path d="M12.5,92.5 L14,88.5 L16.5,91 Z" fill="#bdbdbd"/><path d="M25.5,99 L29.8,103.3 L27.5,105.6 L23.2,101.3 Z" fill="#bdbdbd"/><ellipse cx="20.5" cy="109" rx="7.2" ry="4.3" transform="rotate(-45 20.5 109)" stroke="#bdbdbd" stroke-width="1.1" fill="none"/><path d="M12,117 L15,110.5 L18.5,114 Z" fill="#bdbdbd"/><path d="M16,113.5 L18.5,111 L19.5,113.5 Z" fill="#bdbdbd"/><path d="M22,124 L30,132 L22.5,139.5 L14.5,131.5 Z" fill="#bdbdbd"/><path d="M14.5,131.5 L12.2,133.8 L18.2,139.8 L20.5,137.5" stroke="#bdbdbd" stroke-width="1.1" fill="none"/><path d="M19,141.5 L28.5,141.5" stroke="#bdbdbd" stroke-width="1"/><rect x="11.9" y="150.9" width="1.8" height="1.8" fill="#bdbdbd" opacity="0.8"/><rect x="14.5" y="149.5" width="1.8" height="1.8" fill="#bdbdbd" opacity="0.8"/><rect x="17.200000000000003" y="150.9" width="1.8" height="1.8" fill="#bdbdbd" opacity="0.8"/><rect x="11.9" y="154.0" width="1.8" height="1.8" fill="#bdbdbd" opacity="0.8"/><rect x="14.5" y="152.6" width="1.8" height="1.8" fill="#bdbdbd" opacity="0.8"/><rect x="17.200000000000003" y="154.0" width="1.8" height="1.8" fill="#bdbdbd" opacity="0.8"/><rect x="11.9" y="157.1" width="1.8" height="1.8" fill="#bdbdbd" opacity="0.8"/><rect x="14.5" y="155.7" width="1.8" height="1.8" fill="#bdbdbd" opacity="0.8"/><rect x="19.400000000000002" y="152.6" width="1.8" height="1.8" fill="#bdbdbd" opacity="0.8"/><rect x="22" y="151.3" width="2.7" height="4.4" rx="1" fill="#bdbdbd"/><path d="M16.8,166.8 L16.8,161 Q16.8,157 23.4,157 Q30,157 30,161 L30,166.8 Z" fill="#bdbdbd"/><rect x="18.5" y="162.3" width="9.7" height="2.8" fill="#3c3c3c"/><path d="M19.4,173.9 C20.299999999999997,180.19 20.509999999999998,180.4 26.799999999999997,181.3 C20.509999999999998,182.20000000000002 20.299999999999997,182.41000000000003 19.4,188.70000000000002 C18.5,182.41000000000003 18.29,182.20000000000002 11.999999999999998,181.3 C18.29,180.4 18.5,180.19 19.4,173.9 Z" fill="#bdbdbd"/><path d="M26.5,184.9 C27.4,187.875 27.025,187.5 30.0,188.4 C27.025,189.3 27.4,188.925 26.5,191.9 C25.6,188.925 25.975,189.3 23.0,188.4 C25.975,187.5 25.6,187.875 26.5,184.9 Z" fill="#bdbdbd"/><defs><linearGradient id="dg1" x1="0" x2="1"><stop offset="0" stop-color="#b0b0b0"/><stop offset="1" stop-color="#505050"/></linearGradient><linearGradient id="dg2" x1="0" x2="1"><stop offset="0" stop-color="#505050"/><stop offset="1" stop-color="#a8a8a8"/></linearGradient></defs><path d="M25.2,200.3 C27,203.5 30,207 30,210.8 C30,213.6 27.8,215.8 25.2,215.8 C22.6,215.8 20.5,213.6 20.5,210.8 C20.5,207 23.4,203.5 25.2,200.3 Z" fill="url(#dg2)" stroke="#b8b8b8" stroke-width="0.8"/><path d="M16.8,200.3 C18.6,203.5 21.6,207 21.6,210.8 C21.6,213.6 19.4,215.8 16.8,215.8 C14.2,215.8 12,213.6 12,210.8 C12,207 15,203.5 16.8,200.3 Z" fill="url(#dg1)" stroke="#b8b8b8" stroke-width="0.8"/><rect x="12.3" y="224.3" width="17.4" height="17.4" rx="2.5" stroke="#bdbdbd" stroke-width="1" fill="none"/><path d="M18.1,224.3 V241.7 M12.3,230.2 H26 M12.3,236.4 H26 M21.2,224.8 L26.5,230.5 V236 L21.2,241.2" stroke="#bdbdbd" stroke-width="1" fill="none"/><path d="M19.5,265.2 C14.5,264 12.6,259.5 13.8,256.3 C15.5,252.2 20.5,251.2 24.3,252 C28.3,252.9 30.6,256 30.1,259.6" stroke="#bdbdbd" stroke-width="1" fill="none"/><circle cx="18.5" cy="264.3" r="2.1" stroke="#bdbdbd" stroke-width="1" fill="none"/><path d="M11.9,269.2 L16.5,269 Q20.3,268.6 20.4,266.2" stroke="#bdbdbd" stroke-width="1" fill="none"/><circle cx="23.2" cy="266.8" r="0.75" fill="#bdbdbd"/><circle cx="25.8" cy="266" r="0.75" fill="#bdbdbd"/><circle cx="28" cy="264.3" r="0.75" fill="#bdbdbd"/><circle cx="29.5" cy="262" r="0.75" fill="#bdbdbd"/><path d="M22.9,277 L23.8,282 L28,279.5 L25,283.5 L30,284.2 L25,285 L28,289 L23.8,286.5 L22.9,291.5 L22,286.5 L17.8,289 L20.8,285 L15.8,284.2 L20.8,283.5 L17.8,279.5 L22,282 Z" fill="#bdbdbd"/><path d="M11.9,294.8 L21,285.8" stroke="#bdbdbd" stroke-width="1"/><path d="M20.9,302 L30.9,311.8 L22.9,319.6 L13.6,310.3 L16.4,307.6 L25.3,307.6 L20.9,303.4 L16.4,307.6" fill="#bdbdbd" stroke="#bdbdbd" stroke-width="1" stroke-linejoin="round"/><path d="M13.6,310.3 Q11.8,312 12.2,315 Q12.8,317 14,316.3 L14.5,312 Z" fill="#bdbdbd"/><defs><linearGradient id="gg" x1="1" y1="0" x2="0" y2="1"><stop offset="0" stop-color="#3a3a3a"/><stop offset="1" stop-color="#b8b8b8"/></linearGradient></defs><rect x="13.2" y="328.2" width="15.6" height="15.6" rx="1.8" fill="url(#gg)" stroke="#aaaaaa" stroke-width="0.9"/><path d="M18.5,354.8 L25,358.2 L25,365.5 L18.5,368.7 L12,365.5 L12,358.2 Z M12,358.2 L18.5,361.5 L25,358.2 M18.5,354.8 V368.7" stroke="#bdbdbd" stroke-width="1" fill="none"/><path d="M22,363 L22,372 L24.2,370 L26,373.5 L27.6,372.7 L25.8,369.3 L28.6,369 Z" fill="#bdbdbd" stroke="#3c3c3c" stroke-width="0.6"/><path d="M12,398 L30,380.3" stroke="#bdbdbd" stroke-width="1.2"/><path d="M13.5,423 L20.9,404.8 L28.3,423 M16,417 H25.8" stroke="#bdbdbd" stroke-width="2" fill="none"/><path d="M15.2,443.5 C12.5,442 11.9,439.5 11.9,437.8 C11.9,433.8 15.9,431 20.9,431 C25.9,431 30,433.8 30,437.8 C30,441.8 25.9,444.8 20.9,444.8 C19.5,444.8 18.3,444.6 17.4,444.4 L13.2,446.5 Z" stroke="#bdbdbd" stroke-width="1" fill="none"/><path d="M13.2,456.3 H30.2 L13.2,473.3 Z M16.2,459.2 V467 L23.9,459.2 Z" fill="#bdbdbd" fill-rule="evenodd"/><rect x="11.9" y="480.2" width="5.3" height="4.6" fill="#bdbdbd"/><path d="M17.2,482.4 H28.7 M14.1,484.8 V497" stroke="#bdbdbd" stroke-width="1"/><path d="M17.7,486 L29.1,490.8 L24.3,492.3 L22.5,497.4 Z" fill="#bdbdbd"/><path d="M17,516.5 L13,512 Q12,510.5 13.5,510 L17.5,513 L16.5,506.5 Q17,505.5 18,506.5 L19.5,512 L20,505.7 Q21,505 21.8,505.7 L22.3,512 L24,506.5 Q25,506 25.5,507 L24.8,513 L27.3,508.8 Q28.5,508.5 28.5,509.7 L25.5,520 Q24,522.5 21,522.3 Q18.5,522 17,516.5 Z" fill="#bdbdbd"/><path d="M26.7,530.7 Q28.7,529.2 29.6,531 Q30.2,532.7 28.5,534.2 L26.5,535.6 L27.3,536.7 L25.8,538 L21.6,533.8 L23,532.3 L24.1,533.1 Z" fill="#bdbdbd"/><path d="M22.3,535.5 L14.5,543.5 L12.4,547.6 L16.4,545.5 L24.2,537.5" stroke="#bdbdbd" stroke-width="1" fill="none"/><path d="M12.4,547.6 L13.8,544.4 L15.6,546.2 Z" fill="#bdbdbd"/></svg>
<div class="a" style="left:5px;top:246px;width:33px;height:1px;background:#6a6a6a;"></div>
<div class="a" style="left:5px;top:349px;width:33px;height:1px;background:#6a6a6a;"></div>
<div class="a" style="left:1px;top:552px;width:40px;height:37px;background:#464646;"></div>
<div class="a" style="left:15px;top:564px;width:26px;height:26px;border:2px solid #5a5a5a;border-radius:4px;background:#3a3a3a"></div>
<div class="a" style="left:18px;top:567px;width:19px;height:20px;background:#ffffff;"></div>
<div class="a" style="left:1px;top:552px;width:26px;height:26px;border:3px solid #7a94cc;border-radius:5px;background:#000"></div>
<svg style="left:0;top:0" width="929" height="589"><rect x="256.4" y="5.3" width="17.2" height="17.2" rx="1.5" fill="#434343" stroke="#c0c0c0" stroke-width="1"/><path d="M263.5,9.2 C259.5,10.5 258,14.5 259.8,17.3 C261.5,19.8 266,19.5 269,17.6 C271.5,16 271.8,13 269.5,12.3 C267.5,11.7 264.3,13 263,14.8 C262,16.2 263.5,17 265.5,16.3 C267,15.8 268,14.8 268,14.8" stroke="#c0c0c0" stroke-width="1.2" fill="none" stroke-linecap="round"/><rect x="281.0" y="3" width="1" height="22.5" fill="#6a6a6a"/><rect x="375.0" y="3" width="1" height="22.5" fill="#6a6a6a"/><rect x="431.0" y="3" width="1" height="22.5" fill="#6a6a6a"/><rect x="535.0" y="3" width="1" height="22.5" fill="#6a6a6a"/><rect x="615.0" y="3" width="1" height="22.5" fill="#6a6a6a"/><rect x="695.2" y="3" width="1" height="22.5" fill="#6a6a6a"/><rect x="727.1" y="3" width="1" height="22.5" fill="#6a6a6a"/><path d="M296,21.3 L292.3,21.3 Q291.3,21.3 291.3,20.3 L291.3,6 Q291.3,5 292.3,5 L302.5,5 Q303.5,5 303.5,6 L303.5,15" stroke="#c4c4c4" stroke-width="1.1" fill="none"/><path d="M291.3,17.2 L291.8,20.3 Q292,21.3 293,21.3 L296,21.3 Q294.5,18.5 291.3,17.2 Z" fill="#c4c4c4"/><circle cx="303.6" cy="20.4" r="4.9" fill="#aaaaaa" stroke="#484848" stroke-width="0.8"/><path d="M303.6,17.3 V23.5 M300.5,20.4 H306.7" stroke="#484848" stroke-width="1.2"/><path d="M313.8,21.5 L313.8,7 Q313.8,6 314.8,6 L318.5,6 L320.5,8.3 L322,8.3" stroke="#c4c4c4" stroke-width="1.1" fill="none"/><path d="M315.8,13.4 L331.3,13.4 L328.6,21.6 L313.8,21.6 Z" fill="#c4c4c4"/><path d="M322,13 Q322.2,8.5 327,8.3 L329,8.3" stroke="#c4c4c4" stroke-width="1.1" fill="none"/><path d="M328.5,5.8 L331.3,8.3 L328.5,10.8 Z" fill="#c4c4c4"/><path d="M342.8,8.1 L340.3,8.1 L336.3,16.2 L336.3,20.5 Q336.3,21.7 337.5,21.7 L353.5,21.7 Q354.8,21.7 354.8,20.5 L354.8,16.2 L350.9,8.1 L348.3,8.1" stroke="#c4c4c4" stroke-width="1.1" fill="none" stroke-linejoin="round"/><rect x="337" y="16.8" width="17.2" height="4.3" fill="#c4c4c4"/><rect x="338.5" y="18" width="14.2" height="2" fill="#7c7c7c"/><path d="M345.5,4.5 V13" stroke="#c4c4c4" stroke-width="1.2"/><path d="M342.3,10.7 L345.5,14.3 L348.7,10.7 Z" fill="#c4c4c4"/><path d="M360.3,12.3 L364,15.8 L367.7,12.3" stroke="#c4c4c4" stroke-width="1.1" fill="none"/><path d="M383.2,9.5 L388.8,5.4 L388.8,13.8 Z" fill="#c4c4c4"/><path d="M388,9.5 L393.8,9.5 Q398.8,9.5 398.8,15 Q398.8,20.6 393.8,20.6 L384,20.6" stroke="#c4c4c4" stroke-width="1.2" fill="none"/><path d="M422.8,9.5 L417.2,5.4 L417.2,13.8 Z" fill="#7a7a7a"/><path d="M418,9.5 L412.2,9.5 Q407.2,9.5 407.2,15 Q407.2,20.6 412.2,20.6 L422,20.6" stroke="#7a7a7a" stroke-width="1.2" fill="none"/><path d="M451.54,15.44 L455.21,16.43" stroke="#cfcfcf" stroke-width="1.6" stroke-linecap="round"/><path d="M450.29,17.59 L452.98,20.28" stroke="#cfcfcf" stroke-width="1.6" stroke-linecap="round"/><path d="M448.14,18.84 L449.13,22.51" stroke="#cfcfcf" stroke-width="1.6" stroke-linecap="round"/><path d="M445.66,18.84 L444.67,22.51" stroke="#cfcfcf" stroke-width="1.6" stroke-linecap="round"/><path d="M443.51,17.59 L440.82,20.28" stroke="#cfcfcf" stroke-width="1.6" stroke-linecap="round"/><path d="M442.26,15.44 L438.59,16.43" stroke="#cfcfcf" stroke-width="1.6" stroke-linecap="round"/><path d="M442.26,12.96 L438.59,11.97" stroke="#cfcfcf" stroke-width="1.6" stroke-linecap="round"/><path d="M443.51,10.81 L440.82,8.12" stroke="#cfcfcf" stroke-width="1.6" stroke-linecap="round"/><path d="M445.66,9.56 L444.67,5.89" stroke="#cfcfcf" stroke-width="1.6" stroke-linecap="round"/><path d="M448.14,9.56 L449.13,5.89" stroke="#cfcfcf" stroke-width="1.6" stroke-linecap="round"/><path d="M450.29,10.81 L452.98,8.12" stroke="#cfcfcf" stroke-width="1.6" stroke-linecap="round"/><path d="M451.54,12.96 L455.21,11.97" stroke="#cfcfcf" stroke-width="1.6" stroke-linecap="round"/><rect x="463.5" y="6.2" width="11.4" height="11.4" rx="0.8" fill="none" stroke="#858585" stroke-width="1" stroke-dasharray="1.8 1.2"/><path d="M478.50,18.00 L481.00,18.00" stroke="#858585" stroke-width="1"/><path d="M478.10,19.50 L480.26,20.75" stroke="#858585" stroke-width="1"/><path d="M477.00,20.60 L478.25,22.76" stroke="#858585" stroke-width="1"/><path d="M475.50,21.00 L475.50,23.50" stroke="#858585" stroke-width="1"/><path d="M495.2,5.3 L504.8,14.6 L496.9,22.6 L488,13.8 L490.5,11.3 L500,11.3 L495.2,6.6 L490.5,11.3" fill="#c4c4c4" stroke="#c4c4c4" stroke-width="1" stroke-linejoin="round"/><path d="M488,13.8 Q486,15.5 486.3,18 Q486.8,19.2 488,18.5 L488.6,15 Z" fill="#c4c4c4"/><rect x="512.3" y="8.7" width="13.8" height="13.2" fill="none" stroke="#c4c4c4" stroke-width="1"/><path d="M519.2,8.7 V5.5" stroke="#c4c4c4" stroke-width="1"/><circle cx="512.3" cy="8.7" r="1.1" fill="#c4c4c4"/><circle cx="519.2" cy="8.7" r="1.1" fill="#c4c4c4"/><circle cx="526.1" cy="8.7" r="1.1" fill="#c4c4c4"/><circle cx="512.3" cy="15.3" r="1.1" fill="#c4c4c4"/><circle cx="526.1" cy="15.3" r="1.1" fill="#c4c4c4"/><circle cx="512.3" cy="21.9" r="1.1" fill="#c4c4c4"/><circle cx="519.2" cy="21.9" r="1.1" fill="#c4c4c4"/><circle cx="526.1" cy="21.9" r="1.1" fill="#c4c4c4"/><circle cx="519.2" cy="5.2" r="1.1" fill="#c4c4c4"/><rect x="543.5" y="6.6" width="15.2" height="14.4" rx="0.8" fill="none" stroke="#858585" stroke-width="1" stroke-dasharray="1.8 1.2"/><path d="M542,5.2 L559.7,22.8" stroke="#858585" stroke-width="1"/><rect x="567.6" y="6.6" width="14" height="14" rx="0.8" fill="none" stroke="#858585" stroke-width="1" stroke-dasharray="1.8 1.2"/><path d="M570,21.5 L583,21.5 L583,8.6 Z" fill="#7e7e7e"/><rect x="591.3" y="6.2" width="15.2" height="15.2" rx="1.8" fill="none" stroke="#858585" stroke-width="1"/><rect x="593.6" y="8.5" width="10.6" height="10.6" rx="0.8" fill="none" stroke="#858585" stroke-width="1" stroke-dasharray="1.6 1"/><rect x="619.2" y="2.3" width="47.5" height="23.4" rx="2.5" fill="#5e6a86"/><rect x="642.6" y="2" width="1" height="1" fill="#3f3f3f"/><rect x="642.6" y="25" width="1" height="1" fill="#3f3f3f"/><path d="M623.5,7.3 V21.1 H637.7" stroke="#d4d4d4" stroke-width="1.1" fill="none"/><path d="M623.5,7.3 L637.7,21.1" stroke="#9aa0b0" stroke-width="0.8"/><path d="M646.3,14.6 H664 Q663.5,22.8 655,22.8 Q646.6,22.8 646.3,14.6" stroke="#d4d4d4" stroke-width="1" fill="none"/><path d="M673.4,9 V23 M682.5,11 V23 M671,14.2 H688 M671,20.7" stroke="#8a8a8a" stroke-width="0.8" fill="none"/><path d="M673.4,14.3 V20.7 H688.4 M673.4,14.3 H679" stroke="#d4d4d4" stroke-width="1.1" fill="none"/><path d="M631.2,13.8 L639.4000000000001,5.600000000000001" stroke="#d4d4d4" stroke-width="2.8" stroke-linecap="round" stroke-dasharray="1.2 0.5"/><path d="M654.4,14 L662.6,5.800000000000001" stroke="#d4d4d4" stroke-width="2.8" stroke-linecap="round" stroke-dasharray="1.2 0.5"/><path d="M679.5,13.8 L687.7,5.600000000000001" stroke="#d4d4d4" stroke-width="2.8" stroke-linecap="round" stroke-dasharray="1.2 0.5"/><rect x="705.5" y="4.2" width="12" height="19.2" rx="1.5" fill="none" stroke="#c4c4c4" stroke-width="1"/><rect x="705.5" y="20" width="12" height="3.5" rx="1" fill="#c4c4c4"/><circle cx="708.2" cy="7.3" r="0.9" fill="#c4c4c4"/><circle cx="711.7" cy="7.3" r="0.9" fill="#c4c4c4"/><circle cx="714.7" cy="7.3" r="0.9" fill="#c4c4c4"/><circle cx="708.2" cy="10.3" r="0.9" fill="#c4c4c4"/><circle cx="711.7" cy="10.3" r="0.9" fill="#c4c4c4"/><circle cx="708.2" cy="13.4" r="0.9" fill="#c4c4c4"/><circle cx="711.7" cy="13.4" r="0.9" fill="#c4c4c4"/><circle cx="714.7" cy="13.4" r="0.9" fill="#c4c4c4"/><circle cx="708.2" cy="16.4" r="0.9" fill="#c4c4c4"/><path d="M737.5,19.8 A7.3,7.3 0 1 1 740.3,21.3 L735.3,22.8 Z" fill="none" stroke="#c4c4c4" stroke-width="1.1" stroke-linejoin="round"/><path d="M740.5,11.8 Q740.5,8.8 743.3,8.8 Q746,8.8 746,11.3 Q746,13 743.5,14.3 L743.5,16" stroke="#c4c4c4" stroke-width="1.6" fill="none"/><rect x="742.5" y="17.3" width="2" height="1.9" fill="#c4c4c4"/><path d="M747.8,9 L751.4,5.8" stroke="#c4c4c4" stroke-width="1.1"/><path d="M748.8,4.9 L752.3,4.9 L752.3,8.4 Z" fill="#c4c4c4"/><path d="M7.1,6.9 L3,11 L7.1,15.1 M11.6,6.9 L7.5,11 L11.6,15.1" stroke="#9a9a9a" stroke-width="1.1" fill="none"/><path d="M49.3,6.9 L45.2,11 L49.3,15.1 M53.8,6.9 L49.7,11 L53.8,15.1" stroke="#9a9a9a" stroke-width="1.1" fill="none"/><path d="M75.8,6.9 L71.7,11 L75.8,15.1" stroke="#9a9a9a" stroke-width="1.1" fill="none"/><rect x="33.0" y="5.3" width="1" height="11.7" fill="#9a9a9a"/><rect x="35.4" y="5.3" width="1" height="11.7" fill="#9a9a9a"/><rect x="37.8" y="5.3" width="1" height="11.7" fill="#9a9a9a"/><rect x="243.5" y="5.3" width="1" height="11.7" fill="#9a9a9a"/><rect x="245.9" y="5.3" width="1" height="11.7" fill="#9a9a9a"/><rect x="248.3" y="5.3" width="1" height="11.7" fill="#9a9a9a"/><path d="M60.5,48.8 L66.5,54.8 L63.5,57.8 L57.5,51.8 Z" fill="#bdbdbd"/><path d="M57.8,52.3 Q49,56.5 48.3,66.3 Q58.5,66.5 63.5,58" stroke="#bdbdbd" stroke-width="1" fill="none"/><path d="M56.5,57.5 L49.5,65.3" stroke="#bdbdbd" stroke-width="1.1"/><circle cx="56.8" cy="57.3" r="1.2" fill="#bdbdbd"/><path d="M80.2,28.3 Q82.4,27.2 83.5,29.6 L74.4,38.7 L69.7,41.8 L70.8,37.6 Z" fill="#bdbdbd"/><path d="M76.8,35.2 H84 M76.8,38.5 H84 M76.8,41.8 H84 M77.3,35.2 V41.8 M80.5,35.2 V41.8" stroke="#bdbdbd" stroke-width="1" fill="none"/><path d="M67.8,414.3 H84.2 M67.8,419 H84.2" stroke="#bdbdbd" stroke-width="1"/><circle cx="73.9" cy="414.3" r="1.8" fill="#bdbdbd"/><circle cx="78.7" cy="419" r="1.8" fill="#bdbdbd"/><rect x="46" y="385.5" width="10.5" height="10.5" rx="1" fill="none" stroke="#bdbdbd" stroke-width="1"/><path d="M48.3,390.5 L50.7,393 L54.8,388.3" stroke="#bdbdbd" stroke-width="1" fill="none"/><path d="M57.5,388.5 L59.5,390.5 V397.8 Q59.5,398.5 58.8,398.5 H50.5 L48.5,396.5" stroke="#9a9a9a" stroke-width="1.2" fill="none"/><rect x="195.3" y="387" width="12.3" height="11" rx="1.2" fill="none" stroke="#bdbdbd" stroke-width="1"/><path d="M201.5,385 V394 M198.5,391 L201.5,394 L204.5,391" stroke="#bdbdbd" stroke-width="1" fill="none"/><rect x="213.8" y="386.6" width="9.5" height="9.5" rx="1.2" fill="none" stroke="#bdbdbd" stroke-width="1"/><rect x="217.3" y="389.4" width="9.8" height="9.2" rx="1.2" fill="#474747" stroke="#bdbdbd" stroke-width="1"/><path d="M222.2,391.2 V396.8 M219.4,394 H225" stroke="#bdbdbd" stroke-width="1"/><path d="M235.5,388.3 H247.3 M239.5,388.3 V386.5 H243.3 V388.3 M237,389 V397.5 Q237,398.5 238,398.5 H244.8 Q245.8,398.5 245.8,397.5 V389 M239.7,390.5 V396.5 M242,390.5 V396.5 M243.8,390.5 V396.5" stroke="#bdbdbd" stroke-width="1" fill="none"/><rect x="236.5" y="452.5" width="6.5" height="6" rx="0.6" fill="#b8b8b8"/><path d="M232.8,452.5 V450.8 Q232.8,448.2 235.3,448.2 Q237.8,448.2 237.8,450.8 V452.5" stroke="#b8b8b8" stroke-width="1.1" fill="none"/><path d="M208.4,479.5 L212.2,475.8 L216,479.5 M208.4,484.1 L212.2,487.8 L216,484.1" stroke="#c8c8c8" stroke-width="1.1" fill="none"/><path d="M208.4,506.5 L212.2,502.8 L216,506.5 M208.4,511.1 L212.2,514.8 L216,511.1" stroke="#c8c8c8" stroke-width="1.1" fill="none"/><path d="M208.4,560.5 L212.2,556.8 L216,560.5 M208.4,565.0999999999999 L212.2,568.8 L216,565.0999999999999" stroke="#c8c8c8" stroke-width="1.1" fill="none"/><path d="M223.3,476.8 L227.3,480.5 L231.3,476.8 M223.3,481.2 L227.3,485 L231.3,481.2" stroke="#bdbdbd" stroke-width="1.1" fill="none"/><rect x="223.5" y="504.8" width="7.5" height="7" rx="1" fill="none" stroke="#bdbdbd" stroke-width="1"/><path d="M224,511.5 L230.5,505" stroke="#bdbdbd" stroke-width="1"/><rect x="152" y="528" width="4" height="14" fill="#c2c2c2"/><rect x="149" y="530" width="10" height="10" fill="#c2c2c2"/><rect x="147" y="533" width="14" height="4" fill="#c2c2c2"/><circle cx="172" cy="534.8" r="6.9" fill="#bdbdbd"/><circle cx="191.9" cy="534.9" r="7.2" fill="#9aa2b6"/><circle cx="191.9" cy="534.9" r="5.6" fill="#bdbdbd"/><defs><radialGradient id="sc"><stop offset="0" stop-color="#c4c4c4"/><stop offset="0.5" stop-color="#bcbcbc"/><stop offset="0.62" stop-color="#8c8c8c"/><stop offset="0.85" stop-color="#7a7a7a"/><stop offset="1" stop-color="#4a4a4a"/></radialGradient></defs><circle cx="211.8" cy="534.9" r="8.3" fill="url(#sc)"/><path d="M223.8,533 L227.7,536.8 L231.6,533" stroke="#bdbdbd" stroke-width="1.1" fill="none"/><path d="M220.9,574.8 A6.9,6.9 0 1 1 214,581.7" stroke="#bdbdbd" stroke-width="1.1" fill="none"/><circle cx="218.3" cy="575.4" r="0.6" fill="#bdbdbd"/><circle cx="216.2" cy="577.2" r="0.6" fill="#bdbdbd"/><circle cx="214.6" cy="579.4" r="0.6" fill="#bdbdbd"/><path d="M220.9,581.7 V575" stroke="#bdbdbd" stroke-width="1.1"/><circle cx="220.9" cy="581.7" r="1.9" fill="#bdbdbd"/><path transform="translate(237.8,579.6) rotate(37)" d="M3.79,-1.8 L11,-1.8 A1.8,1.8 0 0 1 11,1.8 L3.79,1.8 A4.2,4.2 0 0 1 -3.92,1.5 L-1.5,1.5 L-1.5,-1.5 L-3.92,-1.5 A4.2,4.2 0 0 1 3.79,-1.8 Z" stroke="#bdbdbd" stroke-width="1" fill="none" stroke-linejoin="round"/></svg>
</body></html>
